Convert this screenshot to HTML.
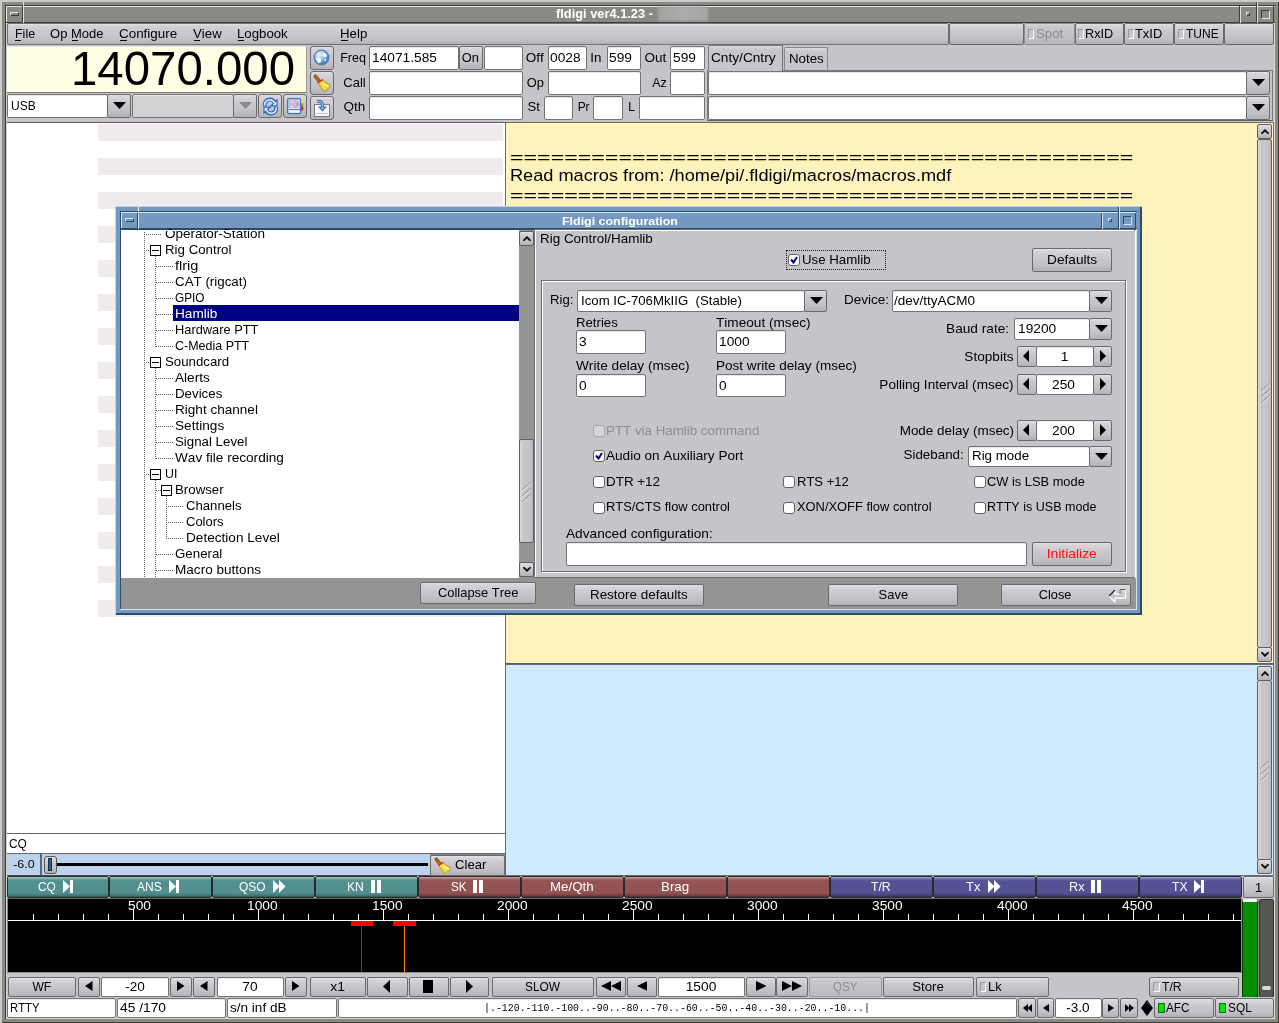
<!DOCTYPE html><html><head><meta charset="utf-8"><title>fldigi</title><style>html,body{margin:0;padding:0;width:1279px;height:1023px;overflow:hidden;background:#cbcbcb;}body{position:relative;font-family:'Liberation Sans',sans-serif;}div{position:absolute;box-sizing:border-box;}.t{height:0;line-height:0;white-space:pre;font-kerning:none;}</style></head><body><div style="left:2px;top:2px;width:1277px;height:1021px;background:#888a85;"></div>
<div style="left:5px;top:5px;width:1271px;height:1px;background:#3c3e3a;"></div>
<div style="left:5px;top:5px;width:1px;height:1014px;background:#3c3e3a;"></div>
<div style="left:6px;top:6px;width:1269px;height:1px;background:#e8e8e8;"></div>
<div style="left:6px;top:6px;width:1px;height:17px;background:#e8e8e8;"></div>
<div style="left:1278px;top:2px;width:1px;height:1021px;background:#3c3e3a;"></div>
<div style="left:2px;top:1022px;width:1277px;height:1px;background:#3c3e3a;"></div>
<div style="left:1274px;top:22px;width:1px;height:997px;background:#d9d9d9;"></div>
<div style="left:6px;top:1018px;width:1269px;height:1px;background:#d9d9d9;"></div>
<div style="left:6px;top:23px;width:1px;height:995px;background:#cfcfcf;"></div>
<div style="left:6px;top:22px;width:1269px;height:1px;background:#3c3e3a;"></div>
<div style="left:22px;top:6px;width:1px;height:16px;background:#3c3e3a;"></div>
<div style="left:23px;top:2px;width:1px;height:21px;background:#e0e0e0;"></div>
<div style="left:1239px;top:6px;width:1px;height:16px;background:#3c3e3a;"></div>
<div style="left:1240px;top:6px;width:1px;height:17px;background:#e0e0e0;"></div>
<div style="left:1256px;top:2px;width:1px;height:20px;background:#3c3e3a;"></div>
<div style="left:1257px;top:2px;width:1px;height:21px;background:#e0e0e0;"></div>
<div style="left:1273px;top:6px;width:1px;height:16px;background:#3c3e3a;"></div>
<div style="left:10px;top:12px;width:9px;height:4px;border:1px solid #e8e8e8;border-right-color:#3c3e3a;border-bottom-color:#3c3e3a"></div>
<div style="left:1246px;top:12px;width:4px;height:4px;border:1px solid #e8e8e8;border-right-color:#3c3e3a;border-bottom-color:#3c3e3a"></div>
<div style="left:1261px;top:10px;width:9px;height:9px;border:1px solid #3c3e3a;border-right-color:#e8e8e8;border-bottom-color:#e8e8e8"></div>
<div class="t" style="left:556.10px;top:13.93px;font-size:12.60px;color:#ffffff;font-weight:bold;transform:scaleX(1.0186);transform-origin:0 0;font-family:'Liberation Sans',sans-serif;">fldigi ver4.1.23 -</div>
<div style="left:658px;top:7px;width:50px;height:14px;background:linear-gradient(90deg,#a2a3a1,#acadab 50%,#a5a6a4);filter:blur(1px)"></div>
<div style="left:7px;top:23px;width:1267px;height:99px;background:#c6c4c8;"></div>
<div style="left:7px;top:23px;width:942px;height:22px;background:linear-gradient(#e6e4e8,#d2d0d4 2px,#c8c6ca 50%,#c2c0c4 80%,#b2b0b4);border:1px solid #727173;border-radius:2px"></div>
<div class="t" style="left:14.60px;top:33.93px;font-size:12.60px;color:#000;transform:scaleX(0.9890);transform-origin:0 0;font-family:'Liberation Sans',sans-serif;">File</div>
<div class="t" style="left:50.35px;top:33.93px;font-size:12.60px;color:#000;transform:scaleX(1.0345);transform-origin:0 0;font-family:'Liberation Sans',sans-serif;">Op Mode</div>
<div class="t" style="left:119.10px;top:33.93px;font-size:12.60px;color:#000;transform:scaleX(1.0651);transform-origin:0 0;font-family:'Liberation Sans',sans-serif;">Configure</div>
<div class="t" style="left:192.85px;top:33.93px;font-size:12.60px;color:#000;transform:scaleX(1.0512);transform-origin:0 0;font-family:'Liberation Sans',sans-serif;">View</div>
<div class="t" style="left:237.10px;top:33.93px;font-size:12.60px;color:#000;transform:scaleX(1.0492);transform-origin:0 0;font-family:'Liberation Sans',sans-serif;">Logbook</div>
<div class="t" style="left:340.10px;top:33.93px;font-size:12.60px;color:#000;transform:scaleX(1.0564);transform-origin:0 0;font-family:'Liberation Sans',sans-serif;">Help</div>
<div style="left:15px;top:40px;width:6px;height:1px;background:#000;"></div>
<div style="left:72px;top:40px;width:6px;height:1px;background:#000;"></div>
<div style="left:120px;top:40px;width:7px;height:1px;background:#000;"></div>
<div style="left:194px;top:40px;width:6px;height:1px;background:#000;"></div>
<div style="left:238px;top:40px;width:6px;height:1px;background:#000;"></div>
<div style="left:341px;top:40px;width:7px;height:1px;background:#000;"></div>
<div style="left:949px;top:23px;width:75px;height:22px;border:1px solid #6a696c;border-radius:2px;background:linear-gradient(#e4e2e6,#d6d4d8 2px,#c8c6ca 45%,#c3c1c5 70%,#b3b1b5);"></div>
<div style="left:1024px;top:23px;width:51px;height:22px;border:1px solid #8f8e91;border-radius:2px;background:linear-gradient(#d8d6da,#c9c7cb 3px,#c3c1c5 60%,#b9b7bb);"></div>
<div style="left:1075px;top:23px;width:49px;height:22px;border:1px solid #6a696c;border-radius:2px;background:linear-gradient(#e4e2e6,#d6d4d8 2px,#c8c6ca 45%,#c3c1c5 70%,#b3b1b5);"></div>
<div style="left:1124px;top:23px;width:50px;height:22px;border:1px solid #6a696c;border-radius:2px;background:linear-gradient(#e4e2e6,#d6d4d8 2px,#c8c6ca 45%,#c3c1c5 70%,#b3b1b5);"></div>
<div style="left:1174px;top:23px;width:50px;height:22px;border:1px solid #6a696c;border-radius:2px;background:linear-gradient(#e4e2e6,#d6d4d8 2px,#c8c6ca 45%,#c3c1c5 70%,#b3b1b5);"></div>
<div style="left:1224px;top:23px;width:50px;height:22px;border:1px solid #6a696c;border-radius:2px;background:linear-gradient(#e4e2e6,#d6d4d8 2px,#c8c6ca 45%,#c3c1c5 70%,#b3b1b5);"></div>
<div style="left:1028px;top:29px;width:6px;height:10px;background:#c8c6c9;border:1px solid #9a999c;border-right-color:#fafafa;border-bottom-color:#fafafa"></div>
<div style="left:1078px;top:29px;width:6px;height:10px;background:#c8c6c9;border:1px solid #9a999c;border-right-color:#fafafa;border-bottom-color:#fafafa"></div>
<div style="left:1128px;top:29px;width:6px;height:10px;background:#c8c6c9;border:1px solid #9a999c;border-right-color:#fafafa;border-bottom-color:#fafafa"></div>
<div style="left:1178px;top:29px;width:6px;height:10px;background:#c8c6c9;border:1px solid #9a999c;border-right-color:#fafafa;border-bottom-color:#fafafa"></div>
<div class="t" style="left:1035.60px;top:33.93px;font-size:12.60px;color:#8e8c90;transform:scaleX(1.0532);transform-origin:0 0;font-family:'Liberation Sans',sans-serif;">Spot</div>
<div class="t" style="left:1085.40px;top:33.93px;font-size:12.60px;color:#000;transform:scaleX(1.0084);transform-origin:0 0;font-family:'Liberation Sans',sans-serif;">RxID</div>
<div class="t" style="left:1135.10px;top:33.93px;font-size:12.60px;color:#000;transform:scaleX(1.0234);transform-origin:0 0;font-family:'Liberation Sans',sans-serif;">TxID</div>
<div class="t" style="left:1186.10px;top:33.93px;font-size:12.60px;color:#000;transform:scaleX(0.9525);transform-origin:0 0;font-family:'Liberation Sans',sans-serif;">TUNE</div>
<div style="left:7px;top:46px;width:300px;height:47px;background:#fefee4;border-top:1px solid #e4e2e6;border-bottom:1px solid #7a7a6c;border-right:1px solid #9a9a90"></div>
<div class="t" style="left:70.02px;top:68.80px;font-size:47.60px;color:#000;transform:scaleX(0.9956);transform-origin:100% 0;font-family:'Liberation Sans',sans-serif;">14070.000</div>
<div style="left:7px;top:94px;width:101px;height:24px;border:1px solid #737373;border-radius:2px;background:#fff;box-shadow:inset 0 1px 0 #e9e9e9;"></div>
<div class="t" style="left:11.10px;top:105.93px;font-size:12.60px;color:#000;transform:scaleX(0.9511);transform-origin:0 0;font-family:'Liberation Sans',sans-serif;">USB</div>
<div style="left:107px;top:94px;width:24px;height:24px;border:1px solid #6a696c;border-radius:2px;background:linear-gradient(#e4e2e6,#d6d4d8 2px,#c8c6ca 45%,#c3c1c5 70%,#b3b1b5);"></div>
<svg style="position:absolute;left:112.5px;top:102.0px;" width="13" height="7" viewBox="0 0 13 7"><polygon points="0,0 13,0 6.5,7" fill="#000"/></svg>
<div style="left:132px;top:94px;width:102px;height:24px;border:1px solid #737373;border-radius:2px;background:#d2d1d4;box-shadow:inset 0 1px 0 #e9e9e9;"></div>
<div style="left:233px;top:94px;width:24px;height:24px;border:1px solid #6a696c;border-radius:2px;background:linear-gradient(#e4e2e6,#d6d4d8 2px,#c8c6ca 45%,#c3c1c5 70%,#b3b1b5);"></div>
<svg style="position:absolute;left:238.5px;top:102.0px;" width="13" height="7" viewBox="0 0 13 7"><polygon points="0,0 13,0 6.5,7" fill="#8a898c"/></svg>
<div style="left:258px;top:94px;width:24px;height:24px;border:1px solid #6a696c;border-radius:3px;background:linear-gradient(#e4e2e6,#d6d4d8 2px,#c8c6ca 45%,#c3c1c5 70%,#b3b1b5);"></div>
<svg style="position:absolute;left:262px;top:97px;" width="17" height="19" viewBox="0 0 17 19"><path d="M2.6 9.2 C2.6 4 5 2.6 8 2.6 C10.5 2.6 12 4 13 6" stroke="#2d6cc0" stroke-width="4" fill="none"/><polygon points="7.5,9.5 15.6,9.5 15.6,1.4" fill="#2d6cc0"/><path d="M2.6 8.6 C2.6 4.4 5 2.8 8 2.8 C10.3 2.8 11.6 4 12.6 6" stroke="#e4efff" stroke-width="1.6" fill="none"/><polygon points="10.6,8.2 14.4,8.2 14.4,4.4" fill="#eef5ff"/><path d="M14.4 9.8 C14.4 15 12 16.4 9 16.4 C6.5 16.4 5 15 4 13" stroke="#2d6cc0" stroke-width="4" fill="none"/><polygon points="9.5,9.5 1.4,9.5 1.4,17.6" fill="#2d6cc0"/><path d="M14.4 10.4 C14.4 14.6 12 16.2 9 16.2 C6.7 16.2 5.4 15 4.4 13" stroke="#e4efff" stroke-width="1.6" fill="none"/><polygon points="6.4,10.8 2.6,10.8 2.6,14.6" fill="#eef5ff"/></svg>
<div style="left:283px;top:94px;width:24px;height:24px;border:1px solid #6a696c;border-radius:3px;background:linear-gradient(#e4e2e6,#d6d4d8 2px,#c8c6ca 45%,#c3c1c5 70%,#b3b1b5);"></div>
<svg style="position:absolute;left:286px;top:97px;" width="19" height="18" viewBox="0 0 19 18"><rect x="1.6" y="1.6" width="13" height="15" rx="1" fill="#cfe0f6" stroke="#3f74c0" stroke-width="1.3"/><rect x="3" y="13.2" width="11" height="2" fill="#f4f4f4"/><line x1="3" y1="12.6" x2="14" y2="12.6" stroke="#5878b0" stroke-width="1"/><line x1="3.8" y1="3" x2="3.8" y2="11" stroke="#8aa8d8" stroke-width="1"/><path d="M11.6 9.6 A3.4 3.4 0 1 1 12.8 7.2 V8.2 Q12.8 9 12 9 Q11.2 9 11.2 8.2 V5.6" fill="none" stroke="#d878a8" stroke-width="0.9"/><circle cx="9.5" cy="7.3" r="1.5" fill="none" stroke="#d878a8" stroke-width="0.9"/><rect x="15" y="2.5" width="2.2" height="4" fill="#f4e020"/><rect x="15" y="6.5" width="2.2" height="3" fill="#78a820"/><rect x="15" y="9.5" width="2.2" height="4" fill="#e82020"/></svg>
<div style="left:310px;top:46px;width:24px;height:24px;border:1px solid #6a696c;border-radius:3px;background:linear-gradient(#e4e2e6,#d6d4d8 2px,#c8c6ca 45%,#c3c1c5 70%,#b3b1b5);"></div>
<svg style="position:absolute;left:313px;top:49px;" width="18" height="18" viewBox="0 0 18 18"><defs><radialGradient id="gg" cx="35%" cy="30%" r="75%"><stop offset="0" stop-color="#f4faff"/><stop offset=".55" stop-color="#8ab8ea"/><stop offset="1" stop-color="#2f68b8"/></radialGradient></defs><circle cx="8.5" cy="8.5" r="7.3" fill="url(#gg)" stroke="#4a7cc4" stroke-width="1.2"/><path d="M3 9.5 L6 8.5 L8 10 L7.5 13.5 L5 14 Z" fill="#ffffff"/><path d="M9.5 3.5 L13 4.5 L14 7 L11.5 8.5 L10 6.5 Z" fill="#ffffff"/><path d="M11 10.5 L13.5 10 L12.5 13 Z" fill="#ffffff" opacity=".8"/></svg>
<div style="left:310px;top:71px;width:24px;height:24px;border:1px solid #6a696c;border-radius:3px;background:linear-gradient(#e4e2e6,#d6d4d8 2px,#c8c6ca 45%,#c3c1c5 70%,#b3b1b5);"></div>
<svg style="position:absolute;left:313px;top:74px;" width="20" height="20" viewBox="0 0 20 20"><g transform="scale(1.0)"><path d="M2.5 2.5 L6.5 7.5" stroke="#6a3a10" stroke-width="3.6" stroke-linecap="round"/><path d="M2.5 2.5 L6.5 7.5" stroke="#b0701e" stroke-width="2.2" stroke-linecap="round"/><path d="M5 9 L9.5 6 Q13 9 17 11 L16.5 13.5 Q13.5 16 11 17.5 Q8 14 5 9Z" fill="#f0dc40" stroke="#b89a10" stroke-width="1"/><path d="M10 9.5 Q13 12 16 12.5" stroke="#fff8a0" stroke-width="1.2" fill="none"/><path d="M4.5 9 L10 5.5" stroke="#d02a20" stroke-width="1.4"/></g></svg>
<div style="left:310px;top:96px;width:24px;height:24px;border:1px solid #6a696c;border-radius:3px;background:linear-gradient(#e4e2e6,#d6d4d8 2px,#c8c6ca 45%,#c3c1c5 70%,#b3b1b5);"></div>
<svg style="position:absolute;left:312px;top:98px;" width="20" height="20" viewBox="0 0 20 20"><rect x="2.5" y="6.5" width="15" height="12" fill="#f6f6f6" stroke="#7a7a7a"/><rect x="4" y="15" width="12" height="1" fill="#c4c4c4"/><path d="M5 3.5 Q11 2 10.5 9" fill="none" stroke="#2d6cc0" stroke-width="3.2"/><path d="M5 3.5 Q11 2 10.5 9" fill="none" stroke="#9cc4f0" stroke-width="1.2"/><polygon points="6,8.5 15,8.5 10.5,13.5" fill="#2d6cc0"/><polygon points="8.5,9.5 12.5,9.5 10.5,11.8" fill="#9cc4f0"/></svg>
<div class="t" style="left:339.70px;top:57.93px;font-size:12.60px;color:#000;transform:scaleX(0.9928);transform-origin:100% 0;font-family:'Liberation Sans',sans-serif;">Freq</div>
<div class="t" style="left:343.89px;top:82.93px;font-size:12.60px;color:#000;transform:scaleX(1.0316);transform-origin:100% 0;font-family:'Liberation Sans',sans-serif;">Call</div>
<div class="t" style="left:345.29px;top:106.93px;font-size:12.60px;color:#000;transform:scaleX(1.0718);transform-origin:100% 0;font-family:'Liberation Sans',sans-serif;">Qth</div>
<div style="left:369px;top:46px;width:90px;height:24px;border:1px solid #737373;border-radius:2px;background:#fff;box-shadow:inset 0 1px 0 #e9e9e9;"></div>
<div class="t" style="left:371.60px;top:57.93px;font-size:12.60px;color:#000;transform:scaleX(1.0904);transform-origin:0 0;font-family:'Liberation Sans',sans-serif;">14071.585</div>
<div style="left:459px;top:46px;width:24px;height:24px;border:1px solid #6a696c;border-radius:2px;background:linear-gradient(#e4e2e6,#d6d4d8 2px,#c8c6ca 45%,#c3c1c5 70%,#b3b1b5);"></div>
<div class="t" style="left:462.10px;top:57.93px;font-size:12.60px;color:#000;transform:scaleX(1.0152);transform-origin:50% 0;font-family:'Liberation Sans',sans-serif;">On</div>
<div style="left:484px;top:46px;width:39px;height:24px;border:1px solid #737373;border-radius:2px;background:#fff;box-shadow:inset 0 1px 0 #e9e9e9;"></div>
<div class="t" style="left:527.13px;top:57.93px;font-size:12.60px;color:#000;transform:scaleX(1.0691);transform-origin:100% 0;font-family:'Liberation Sans',sans-serif;">Off</div>
<div style="left:548px;top:46px;width:39px;height:24px;border:1px solid #737373;border-radius:2px;background:#fff;box-shadow:inset 0 1px 0 #e9e9e9;"></div>
<div class="t" style="left:549.60px;top:57.93px;font-size:12.60px;color:#000;transform:scaleX(1.0905);transform-origin:0 0;font-family:'Liberation Sans',sans-serif;">0028</div>
<div class="t" style="left:591.49px;top:57.93px;font-size:12.60px;color:#000;transform:scaleX(1.0618);transform-origin:100% 0;font-family:'Liberation Sans',sans-serif;">In</div>
<div style="left:607px;top:46px;width:34px;height:24px;border:1px solid #737373;border-radius:2px;background:#fff;box-shadow:inset 0 1px 0 #e9e9e9;"></div>
<div class="t" style="left:608.50px;top:57.93px;font-size:12.60px;color:#000;transform:scaleX(1.0905);transform-origin:0 0;font-family:'Liberation Sans',sans-serif;">599</div>
<div class="t" style="left:646.29px;top:57.93px;font-size:12.60px;color:#000;transform:scaleX(1.0718);transform-origin:100% 0;font-family:'Liberation Sans',sans-serif;">Out</div>
<div style="left:670px;top:46px;width:35px;height:24px;border:1px solid #737373;border-radius:2px;background:#fff;box-shadow:inset 0 1px 0 #e9e9e9;"></div>
<div class="t" style="left:672.50px;top:57.93px;font-size:12.60px;color:#000;transform:scaleX(1.0905);transform-origin:0 0;font-family:'Liberation Sans',sans-serif;">599</div>
<div style="left:369px;top:71px;width:154px;height:24px;border:1px solid #737373;border-radius:2px;background:#fff;box-shadow:inset 0 1px 0 #e9e9e9;"></div>
<div class="t" style="left:526.89px;top:82.93px;font-size:12.60px;color:#000;transform:scaleX(1.0161);transform-origin:100% 0;font-family:'Liberation Sans',sans-serif;">Op</div>
<div style="left:548px;top:71px;width:93px;height:24px;border:1px solid #737373;border-radius:2px;background:#fff;box-shadow:inset 0 1px 0 #e9e9e9;"></div>
<div class="t" style="left:651.90px;top:82.93px;font-size:12.60px;color:#000;transform:scaleX(0.9861);transform-origin:100% 0;font-family:'Liberation Sans',sans-serif;">Az</div>
<div style="left:670px;top:71px;width:35px;height:24px;border:1px solid #737373;border-radius:2px;background:#fff;box-shadow:inset 0 1px 0 #e9e9e9;"></div>
<div style="left:369px;top:96px;width:154px;height:24px;border:1px solid #737373;border-radius:2px;background:#fff;box-shadow:inset 0 1px 0 #e9e9e9;"></div>
<div class="t" style="left:527.59px;top:106.93px;font-size:12.60px;color:#000;transform:scaleX(1.0355);transform-origin:100% 0;font-family:'Liberation Sans',sans-serif;">St</div>
<div style="left:544px;top:96px;width:29px;height:24px;border:1px solid #737373;border-radius:2px;background:#fff;box-shadow:inset 0 1px 0 #e9e9e9;"></div>
<div class="t" style="left:577.40px;top:106.93px;font-size:12.60px;color:#000;transform:scaleX(0.9499);transform-origin:100% 0;font-family:'Liberation Sans',sans-serif;">Pr</div>
<div style="left:593px;top:96px;width:30px;height:24px;border:1px solid #737373;border-radius:2px;background:#fff;box-shadow:inset 0 1px 0 #e9e9e9;"></div>
<div class="t" style="left:627.99px;top:106.93px;font-size:12.60px;color:#000;transform:scaleX(0.9544);transform-origin:100% 0;font-family:'Liberation Sans',sans-serif;">L</div>
<div style="left:639px;top:96px;width:66px;height:24px;border:1px solid #737373;border-radius:2px;background:#fff;box-shadow:inset 0 1px 0 #e9e9e9;"></div>
<div style="left:707px;top:70px;width:566px;height:51px;background:#c6c4c8;border:1px solid #7a797c;border-bottom-color:#5f5e61"></div>
<div style="left:708px;top:45px;width:75px;height:26px;background:linear-gradient(#dcdadf,#c8c6ca 4px,#c6c4c8);border:1px solid #7a797c;border-bottom:none;border-radius:2px 2px 0 0"></div>
<div style="left:782px;top:45px;width:1px;height:26px;background:#6f6e71;"></div>
<div style="left:784px;top:47px;width:44px;height:23px;background:linear-gradient(#dcdadf,#c8c6ca 4px,#c6c4c8);border:1px solid #8a898c;border-bottom:none;border-radius:2px 2px 0 0"></div>
<div class="t" style="left:711.40px;top:57.93px;font-size:12.60px;color:#000;transform:scaleX(1.0852);transform-origin:0 0;font-family:'Liberation Sans',sans-serif;">Cnty/Cntry</div>
<div class="t" style="left:788.50px;top:58.93px;font-size:12.60px;color:#000;transform:scaleX(1.0534);transform-origin:0 0;font-family:'Liberation Sans',sans-serif;">Notes</div>
<div style="left:708px;top:71px;width:539px;height:24px;border:1px solid #737373;border-radius:2px;background:#fff;box-shadow:inset 0 1px 0 #e9e9e9;"></div>
<div style="left:1246px;top:71px;width:24px;height:24px;border:1px solid #6a696c;border-radius:2px;background:linear-gradient(#e4e2e6,#d6d4d8 2px,#c8c6ca 45%,#c3c1c5 70%,#b3b1b5);"></div>
<svg style="position:absolute;left:1251.5px;top:79.0px;" width="13" height="7" viewBox="0 0 13 7"><polygon points="0,0 13,0 6.5,7" fill="#000"/></svg>
<div style="left:708px;top:96px;width:539px;height:24px;border:1px solid #737373;border-radius:2px;background:#fff;box-shadow:inset 0 1px 0 #e9e9e9;"></div>
<div style="left:1246px;top:96px;width:24px;height:24px;border:1px solid #6a696c;border-radius:2px;background:linear-gradient(#e4e2e6,#d6d4d8 2px,#c8c6ca 45%,#c3c1c5 70%,#b3b1b5);"></div>
<svg style="position:absolute;left:1251.5px;top:104.0px;" width="13" height="7" viewBox="0 0 13 7"><polygon points="0,0 13,0 6.5,7" fill="#000"/></svg>
<div style="left:7px;top:122px;width:1267px;height:1px;background:#5c5b5e;"></div>
<div style="left:7px;top:123px;width:498px;height:711px;background:#ffffff;"></div>
<div style="left:98px;top:124px;width:405px;height:17px;background:#efebef;"></div>
<div style="left:98px;top:158px;width:405px;height:17px;background:#efebef;"></div>
<div style="left:98px;top:192px;width:405px;height:17px;background:#efebef;"></div>
<div style="left:98px;top:226px;width:405px;height:17px;background:#efebef;"></div>
<div style="left:98px;top:260px;width:405px;height:17px;background:#efebef;"></div>
<div style="left:98px;top:294px;width:405px;height:17px;background:#efebef;"></div>
<div style="left:98px;top:328px;width:405px;height:17px;background:#efebef;"></div>
<div style="left:98px;top:362px;width:405px;height:17px;background:#efebef;"></div>
<div style="left:98px;top:396px;width:405px;height:17px;background:#efebef;"></div>
<div style="left:98px;top:430px;width:405px;height:17px;background:#efebef;"></div>
<div style="left:98px;top:464px;width:405px;height:17px;background:#efebef;"></div>
<div style="left:98px;top:498px;width:405px;height:17px;background:#efebef;"></div>
<div style="left:98px;top:532px;width:405px;height:17px;background:#efebef;"></div>
<div style="left:98px;top:566px;width:405px;height:17px;background:#efebef;"></div>
<div style="left:98px;top:600px;width:405px;height:17px;background:#efebef;"></div>
<div style="left:505px;top:122px;width:769px;height:542px;background:#fef2bd;border:1px solid #707058;border-right-color:#7a7a5a;border-bottom-color:#606050"></div>
<div style="left:1257px;top:124px;width:15px;height:15px;border:1px solid #5f5e61;border-radius:2px;background:linear-gradient(#e4e2e6,#d6d4d8 2px,#c8c6ca 45%,#c3c1c5 70%,#b3b1b5);"></div>
<svg style="position:absolute;left:1260.5px;top:129.0px;" width="8" height="5" viewBox="0 0 8 5"><polygon points="0,4.5 4,0.3 8,4.5 6.3,4.5 4,2.3 1.7,4.5" fill="#000" stroke="#000" stroke-width=".6"/></svg>
<div style="left:1257px;top:139px;width:15px;height:509px;border:1px solid #616063;border-radius:2px;background:linear-gradient(90deg,#dddbe0,#c8c6ca 3px,#c6c4c8 70%,#b8b6ba);"></div>
<svg style="position:absolute;left:1260.5px;top:383.0px;" width="10" height="21" viewBox="0 0 10 21"><path d="M0.5 7.5 L8.5 0.5" stroke="#6f6e71" stroke-width="1" stroke-dasharray="1,0.6"/><path d="M1 8.5 L9 1.5" stroke="#fafafa" stroke-width="0.8" opacity=".7"/><path d="M0.5 13.5 L8.5 6.5" stroke="#6f6e71" stroke-width="1" stroke-dasharray="1,0.6"/><path d="M1 14.5 L9 7.5" stroke="#fafafa" stroke-width="0.8" opacity=".7"/><path d="M0.5 19.5 L8.5 12.5" stroke="#6f6e71" stroke-width="1" stroke-dasharray="1,0.6"/><path d="M1 20.5 L9 13.5" stroke="#fafafa" stroke-width="0.8" opacity=".7"/></svg>
<div style="left:1257px;top:647px;width:15px;height:15px;border:1px solid #5f5e61;border-radius:2px;background:linear-gradient(#e4e2e6,#d6d4d8 2px,#c8c6ca 45%,#c3c1c5 70%,#b3b1b5);"></div>
<svg style="position:absolute;left:1260.5px;top:652.0px;" width="8" height="5" viewBox="0 0 8 5"><polygon points="0,0.5 4,4.7 8,0.5 6.3,0.5 4,2.7 1.7,0.5" fill="#000" stroke="#000" stroke-width=".6"/></svg>
<div class="t" style="left:510.30px;top:158.48px;font-size:16.80px;color:#000;transform:scaleX(1.3825);transform-origin:0 0;font-family:'Liberation Sans',sans-serif;">==============================================</div>
<div class="t" style="left:510.30px;top:176.48px;font-size:16.80px;color:#000;transform:scaleX(1.0827);transform-origin:0 0;font-family:'Liberation Sans',sans-serif;">Read macros from: /home/pi/.fldigi/macros/macros.mdf</div>
<div class="t" style="left:510.30px;top:196.48px;font-size:16.80px;color:#000;transform:scaleX(1.3825);transform-origin:0 0;font-family:'Liberation Sans',sans-serif;">==============================================</div>
<div style="left:505px;top:664px;width:769px;height:212px;background:#d0eafd;border:1px solid #5f6e78;border-right-color:#6a7a84;border-bottom-color:#5f6e78"></div>
<div style="left:1257px;top:666px;width:15px;height:15px;border:1px solid #5f5e61;border-radius:2px;background:linear-gradient(#e4e2e6,#d6d4d8 2px,#c8c6ca 45%,#c3c1c5 70%,#b3b1b5);"></div>
<svg style="position:absolute;left:1260.5px;top:671.0px;" width="8" height="5" viewBox="0 0 8 5"><polygon points="0,4.5 4,0.3 8,4.5 6.3,4.5 4,2.3 1.7,4.5" fill="#000" stroke="#000" stroke-width=".6"/></svg>
<div style="left:1257px;top:680px;width:15px;height:180px;border:1px solid #616063;border-radius:2px;background:linear-gradient(90deg,#dddbe0,#c8c6ca 3px,#c6c4c8 70%,#b8b6ba);"></div>
<svg style="position:absolute;left:1260.0px;top:760.5px;" width="10" height="21" viewBox="0 0 10 21"><path d="M0.5 7.5 L8.5 0.5" stroke="#6f6e71" stroke-width="1" stroke-dasharray="1,0.6"/><path d="M1 8.5 L9 1.5" stroke="#fafafa" stroke-width="0.8" opacity=".7"/><path d="M0.5 13.5 L8.5 6.5" stroke="#6f6e71" stroke-width="1" stroke-dasharray="1,0.6"/><path d="M1 14.5 L9 7.5" stroke="#fafafa" stroke-width="0.8" opacity=".7"/><path d="M0.5 19.5 L8.5 12.5" stroke="#6f6e71" stroke-width="1" stroke-dasharray="1,0.6"/><path d="M1 20.5 L9 13.5" stroke="#fafafa" stroke-width="0.8" opacity=".7"/></svg>
<div style="left:1257px;top:859px;width:15px;height:15px;border:1px solid #5f5e61;border-radius:2px;background:linear-gradient(#e4e2e6,#d6d4d8 2px,#c8c6ca 45%,#c3c1c5 70%,#b3b1b5);"></div>
<svg style="position:absolute;left:1260.5px;top:864.0px;" width="8" height="5" viewBox="0 0 8 5"><polygon points="0,0.5 4,4.7 8,0.5 6.3,0.5 4,2.7 1.7,0.5" fill="#000" stroke="#000" stroke-width=".6"/></svg>
<div style="left:7px;top:833px;width:498px;height:21px;background:#ffffff;border-top:1px solid #6a696c;border-bottom:1px solid #6a696c"></div>
<div class="t" style="left:8.60px;top:843.93px;font-size:12.60px;color:#000;transform:scaleX(0.9433);transform-origin:0 0;font-family:'Liberation Sans',sans-serif;">CQ</div>
<div style="left:7px;top:854px;width:423px;height:22px;background:#bdd2ed;border-bottom:1px solid #4a4a4a"></div>
<div style="left:40px;top:854px;width:2px;height:21px;background:#5c6a78;"></div>
<div class="t" style="left:14.05px;top:864.30px;font-size:11.55px;color:#000;transform:scaleX(1.0788);transform-origin:50% 0;font-family:'Liberation Sans',sans-serif;">-6.0</div>
<div style="left:57px;top:863px;width:371px;height:3px;background:#000;"></div>
<div style="left:44px;top:856px;width:13px;height:18px;border:1px solid #58575a;border-radius:3px;background:linear-gradient(#e4e2e6,#d6d4d8 2px,#c8c6ca 45%,#c3c1c5 70%,#b3b1b5);"></div>
<div style="left:48px;top:858px;width:4px;height:13px;background:#215f99;border:1px solid #102d4a"></div>
<div style="left:430px;top:855px;width:75px;height:21px;border:1px solid #6a696c;border-radius:2px;background:linear-gradient(#e4e2e6,#d6d4d8 2px,#c8c6ca 45%,#c3c1c5 70%,#b3b1b5);"></div>
<svg style="position:absolute;left:434px;top:857px;" width="20" height="20" viewBox="0 0 20 20"><g transform="scale(0.95)"><path d="M2.5 2.5 L6.5 7.5" stroke="#6a3a10" stroke-width="3.6" stroke-linecap="round"/><path d="M2.5 2.5 L6.5 7.5" stroke="#b0701e" stroke-width="2.2" stroke-linecap="round"/><path d="M5 9 L9.5 6 Q13 9 17 11 L16.5 13.5 Q13.5 16 11 17.5 Q8 14 5 9Z" fill="#f0dc40" stroke="#b89a10" stroke-width="1"/><path d="M10 9.5 Q13 12 16 12.5" stroke="#fff8a0" stroke-width="1.2" fill="none"/><path d="M4.5 9 L10 5.5" stroke="#d02a20" stroke-width="1.4"/></g></svg>
<div class="t" style="left:454.60px;top:864.93px;font-size:12.60px;color:#000;transform:scaleX(1.0426);transform-origin:0 0;font-family:'Liberation Sans',sans-serif;">Clear</div>
<div style="left:7px;top:876px;width:1267px;height:23px;background:#c6c4c8;"></div>
<div style="left:7px;top:876px;width:102px;height:22px;background:linear-gradient(#a6cccb,#6aa3a2 2px,#52908f 4px,#52908f 80%,#3f7372 95%,#2a4a4a);border:1px solid #2b2b2b;border-radius:2px"></div>
<div class="t" style="left:38.19px;top:886.93px;font-size:12.60px;color:#ffffff;transform:scaleX(0.9433);transform-origin:0 0;font-family:'Liberation Sans',sans-serif;">CQ</div>
<svg style="position:absolute;left:63px;top:880px;" width="10" height="13" viewBox="0 0 10 13"><polygon points="0,0 7,6.5 0,13" fill="#fff"/><rect x="7" y="0" width="3" height="13" fill="#fff"/></svg>
<div style="left:109px;top:876px;width:103px;height:22px;background:linear-gradient(#a6cccb,#6aa3a2 2px,#52908f 4px,#52908f 80%,#3f7372 95%,#2a4a4a);border:1px solid #2b2b2b;border-radius:2px"></div>
<div class="t" style="left:137.19px;top:886.93px;font-size:12.60px;color:#ffffff;transform:scaleX(0.9577);transform-origin:0 0;font-family:'Liberation Sans',sans-serif;">ANS</div>
<svg style="position:absolute;left:169px;top:880px;" width="10" height="13" viewBox="0 0 10 13"><polygon points="0,0 7,6.5 0,13" fill="#fff"/><rect x="7" y="0" width="3" height="13" fill="#fff"/></svg>
<div style="left:212px;top:876px;width:103px;height:22px;background:linear-gradient(#a6cccb,#6aa3a2 2px,#52908f 4px,#52908f 80%,#3f7372 95%,#2a4a4a);border:1px solid #2b2b2b;border-radius:2px"></div>
<div class="t" style="left:239.33px;top:886.93px;font-size:12.60px;color:#ffffff;transform:scaleX(0.9474);transform-origin:0 0;font-family:'Liberation Sans',sans-serif;">QSO</div>
<svg style="position:absolute;left:273px;top:880px;" width="13" height="13" viewBox="0 0 13 13"><polygon points="0,0 6.5,6.5 0,13" fill="#fff"/><polygon points="6,0 12.5,6.5 6,13" fill="#fff"/></svg>
<div style="left:315px;top:876px;width:103px;height:22px;background:linear-gradient(#a6cccb,#6aa3a2 2px,#52908f 4px,#52908f 80%,#3f7372 95%,#2a4a4a);border:1px solid #2b2b2b;border-radius:2px"></div>
<div class="t" style="left:347.17px;top:886.93px;font-size:12.60px;color:#ffffff;transform:scaleX(0.9632);transform-origin:0 0;font-family:'Liberation Sans',sans-serif;">KN</div>
<svg style="position:absolute;left:371px;top:880px;" width="10" height="13" viewBox="0 0 10 13"><rect x="0" y="0" width="4" height="13" fill="#fff"/><rect x="6" y="0" width="4" height="13" fill="#fff"/></svg>
<div style="left:418px;top:876px;width:103px;height:22px;background:linear-gradient(#cfa3a3,#a26a6a 2px,#935353 4px,#935353 80%,#6f3c3c 95%,#4a2a2a);border:1px solid #2b2b2b;border-radius:2px"></div>
<div class="t" style="left:450.85px;top:886.93px;font-size:12.60px;color:#ffffff;transform:scaleX(0.9221);transform-origin:0 0;font-family:'Liberation Sans',sans-serif;">SK</div>
<svg style="position:absolute;left:473px;top:880px;" width="10" height="13" viewBox="0 0 10 13"><rect x="0" y="0" width="4" height="13" fill="#fff"/><rect x="6" y="0" width="4" height="13" fill="#fff"/></svg>
<div style="left:521px;top:876px;width:103px;height:22px;background:linear-gradient(#cfa3a3,#a26a6a 2px,#935353 4px,#935353 80%,#6f3c3c 95%,#4a2a2a);border:1px solid #2b2b2b;border-radius:2px"></div>
<div class="t" style="left:549.82px;top:886.93px;font-size:12.60px;color:#ffffff;transform:scaleX(1.0545);transform-origin:0 0;font-family:'Liberation Sans',sans-serif;">Me/Qth</div>
<div style="left:624px;top:876px;width:103px;height:22px;background:linear-gradient(#cfa3a3,#a26a6a 2px,#935353 4px,#935353 80%,#6f3c3c 95%,#4a2a2a);border:1px solid #2b2b2b;border-radius:2px"></div>
<div class="t" style="left:660.52px;top:886.93px;font-size:12.60px;color:#ffffff;transform:scaleX(1.0580);transform-origin:0 0;font-family:'Liberation Sans',sans-serif;">Brag</div>
<div style="left:727px;top:876px;width:103px;height:22px;background:linear-gradient(#cfa3a3,#a26a6a 2px,#935353 4px,#935353 80%,#6f3c3c 95%,#4a2a2a);border:1px solid #2b2b2b;border-radius:2px"></div>
<div style="left:830px;top:876px;width:103px;height:22px;background:linear-gradient(#a8a8d2,#6a6aa8 2px,#525295 4px,#525295 80%,#3d3d72 95%,#2a2a4a);border:1px solid #2b2b2b;border-radius:2px"></div>
<div class="t" style="left:870.74px;top:886.93px;font-size:12.60px;color:#ffffff;transform:scaleX(0.9716);transform-origin:0 0;font-family:'Liberation Sans',sans-serif;">T/R</div>
<div style="left:933px;top:876px;width:103px;height:22px;background:linear-gradient(#a8a8d2,#6a6aa8 2px,#525295 4px,#525295 80%,#3d3d72 95%,#2a2a4a);border:1px solid #2b2b2b;border-radius:2px"></div>
<div class="t" style="left:966.38px;top:886.93px;font-size:12.60px;color:#ffffff;transform:scaleX(1.0316);transform-origin:0 0;font-family:'Liberation Sans',sans-serif;">Tx</div>
<svg style="position:absolute;left:988px;top:880px;" width="13" height="13" viewBox="0 0 13 13"><polygon points="0,0 6.5,6.5 0,13" fill="#fff"/><polygon points="6,0 12.5,6.5 6,13" fill="#fff"/></svg>
<div style="left:1036px;top:876px;width:103px;height:22px;background:linear-gradient(#a8a8d2,#6a6aa8 2px,#525295 4px,#525295 80%,#3d3d72 95%,#2a2a4a);border:1px solid #2b2b2b;border-radius:2px"></div>
<div class="t" style="left:1068.87px;top:886.93px;font-size:12.60px;color:#ffffff;transform:scaleX(1.0035);transform-origin:0 0;font-family:'Liberation Sans',sans-serif;">Rx</div>
<svg style="position:absolute;left:1091px;top:880px;" width="10" height="13" viewBox="0 0 10 13"><rect x="0" y="0" width="4" height="13" fill="#fff"/><rect x="6" y="0" width="4" height="13" fill="#fff"/></svg>
<div style="left:1139px;top:876px;width:103px;height:22px;background:linear-gradient(#a8a8d2,#6a6aa8 2px,#525295 4px,#525295 80%,#3d3d72 95%,#2a2a4a);border:1px solid #2b2b2b;border-radius:2px"></div>
<div class="t" style="left:1171.83px;top:886.93px;font-size:12.60px;color:#ffffff;transform:scaleX(0.9656);transform-origin:0 0;font-family:'Liberation Sans',sans-serif;">TX</div>
<svg style="position:absolute;left:1194px;top:880px;" width="10" height="13" viewBox="0 0 10 13"><polygon points="0,0 7,6.5 0,13" fill="#fff"/><rect x="7" y="0" width="3" height="13" fill="#fff"/></svg>
<div style="left:1243px;top:876px;width:31px;height:22px;border:1px solid #6a696c;border-radius:2px;background:linear-gradient(#e4e2e6,#d6d4d8 2px,#c8c6ca 45%,#c3c1c5 70%,#b3b1b5);"></div>
<div class="t" style="left:1254.50px;top:887.93px;font-size:12.60px;color:#000;transform:scaleX(1.0905);transform-origin:50% 0;font-family:'Liberation Sans',sans-serif;">1</div>
<div style="left:7px;top:898px;width:1235px;height:76px;background:#c6c4c8;"></div>
<div style="left:7px;top:898px;width:1235px;height:75px;background:#000;border:1px solid #8a898c;border-top-color:#6a696c"></div>
<div style="left:8px;top:920px;width:1233px;height:1px;background:#ffffff;"></div>
<svg style="position:absolute;left:8px;top:899px;" width="1233" height="73" viewBox="0 0 1233 73"><rect x="25.0" y="15" width="1" height="6" fill="#fff"/><rect x="50.0" y="15" width="1" height="6" fill="#fff"/><rect x="75.0" y="15" width="1" height="6" fill="#fff"/><rect x="100.0" y="15" width="1" height="6" fill="#fff"/><rect x="125.0" y="10" width="1" height="11" fill="#fff"/><rect x="150.0" y="15" width="1" height="6" fill="#fff"/><rect x="175.0" y="15" width="1" height="6" fill="#fff"/><rect x="200.0" y="15" width="1" height="6" fill="#fff"/><rect x="225.0" y="15" width="1" height="6" fill="#fff"/><rect x="250.0" y="10" width="1" height="11" fill="#fff"/><rect x="275.0" y="15" width="1" height="6" fill="#fff"/><rect x="300.0" y="15" width="1" height="6" fill="#fff"/><rect x="325.0" y="15" width="1" height="6" fill="#fff"/><rect x="350.0" y="15" width="1" height="6" fill="#fff"/><rect x="375.0" y="10" width="1" height="11" fill="#fff"/><rect x="400.0" y="15" width="1" height="6" fill="#fff"/><rect x="425.0" y="15" width="1" height="6" fill="#fff"/><rect x="450.0" y="15" width="1" height="6" fill="#fff"/><rect x="475.0" y="15" width="1" height="6" fill="#fff"/><rect x="500.0" y="10" width="1" height="11" fill="#fff"/><rect x="525.0" y="15" width="1" height="6" fill="#fff"/><rect x="550.0" y="15" width="1" height="6" fill="#fff"/><rect x="575.0" y="15" width="1" height="6" fill="#fff"/><rect x="600.0" y="15" width="1" height="6" fill="#fff"/><rect x="625.0" y="10" width="1" height="11" fill="#fff"/><rect x="650.0" y="15" width="1" height="6" fill="#fff"/><rect x="675.0" y="15" width="1" height="6" fill="#fff"/><rect x="700.0" y="15" width="1" height="6" fill="#fff"/><rect x="725.0" y="15" width="1" height="6" fill="#fff"/><rect x="750.0" y="10" width="1" height="11" fill="#fff"/><rect x="775.0" y="15" width="1" height="6" fill="#fff"/><rect x="800.0" y="15" width="1" height="6" fill="#fff"/><rect x="825.0" y="15" width="1" height="6" fill="#fff"/><rect x="850.0" y="15" width="1" height="6" fill="#fff"/><rect x="875.0" y="10" width="1" height="11" fill="#fff"/><rect x="900.0" y="15" width="1" height="6" fill="#fff"/><rect x="925.0" y="15" width="1" height="6" fill="#fff"/><rect x="950.0" y="15" width="1" height="6" fill="#fff"/><rect x="975.0" y="15" width="1" height="6" fill="#fff"/><rect x="1000.0" y="10" width="1" height="11" fill="#fff"/><rect x="1025.0" y="15" width="1" height="6" fill="#fff"/><rect x="1050.0" y="15" width="1" height="6" fill="#fff"/><rect x="1075.0" y="15" width="1" height="6" fill="#fff"/><rect x="1100.0" y="15" width="1" height="6" fill="#fff"/><rect x="1125.0" y="10" width="1" height="11" fill="#fff"/><rect x="1150.0" y="15" width="1" height="6" fill="#fff"/><rect x="1175.0" y="15" width="1" height="6" fill="#fff"/><rect x="1200.0" y="15" width="1" height="6" fill="#fff"/><rect x="1225.0" y="15" width="1" height="6" fill="#fff"/></svg>
<div class="t" style="left:128.10px;top:905.93px;font-size:12.60px;color:#ffffff;transform:scaleX(1.0905);transform-origin:0 0;font-family:'Liberation Sans',sans-serif;">500</div>
<div class="t" style="left:247.10px;top:905.93px;font-size:12.60px;color:#ffffff;transform:scaleX(1.0905);transform-origin:0 0;font-family:'Liberation Sans',sans-serif;">1000</div>
<div class="t" style="left:372.10px;top:905.93px;font-size:12.60px;color:#ffffff;transform:scaleX(1.0905);transform-origin:0 0;font-family:'Liberation Sans',sans-serif;">1500</div>
<div class="t" style="left:497.10px;top:905.93px;font-size:12.60px;color:#ffffff;transform:scaleX(1.0905);transform-origin:0 0;font-family:'Liberation Sans',sans-serif;">2000</div>
<div class="t" style="left:622.10px;top:905.93px;font-size:12.60px;color:#ffffff;transform:scaleX(1.0905);transform-origin:0 0;font-family:'Liberation Sans',sans-serif;">2500</div>
<div class="t" style="left:747.10px;top:905.93px;font-size:12.60px;color:#ffffff;transform:scaleX(1.0905);transform-origin:0 0;font-family:'Liberation Sans',sans-serif;">3000</div>
<div class="t" style="left:872.10px;top:905.93px;font-size:12.60px;color:#ffffff;transform:scaleX(1.0905);transform-origin:0 0;font-family:'Liberation Sans',sans-serif;">3500</div>
<div class="t" style="left:997.10px;top:905.93px;font-size:12.60px;color:#ffffff;transform:scaleX(1.0905);transform-origin:0 0;font-family:'Liberation Sans',sans-serif;">4000</div>
<div class="t" style="left:1122.10px;top:905.93px;font-size:12.60px;color:#ffffff;transform:scaleX(1.0905);transform-origin:0 0;font-family:'Liberation Sans',sans-serif;">4500</div>
<div style="left:351px;top:921px;width:22px;height:5px;background:#ff0000;"></div>
<div style="left:361px;top:926px;width:1px;height:46px;background:#ff0000;"></div>
<div style="left:393px;top:921px;width:23px;height:5px;background:#ff0000;"></div>
<div style="left:404px;top:926px;width:1px;height:46px;background:#ff8000;"></div>
<div style="left:1242px;top:899px;width:16px;height:99px;background:#008f00;border:1px solid #0a3a0a;border-radius:3px;border-top:3px solid #f4f4f4"></div>
<div style="left:1259px;top:899px;width:15px;height:99px;background:#555753;border:1px solid #2e302c;border-radius:3px"></div>
<div style="left:1262px;top:986px;width:9px;height:4px;background:#d8d8d8;border-radius:2px"></div>
<div style="left:7px;top:973px;width:1235px;height:26px;background:#c6c4c8;"></div>
<div style="left:7px;top:997px;width:1267px;height:21px;background:#c6c4c8;"></div>
<div style="left:8px;top:977px;width:68px;height:20px;border:1px solid #6a696c;border-radius:2px;background:linear-gradient(#e4e2e6,#d6d4d8 2px,#c8c6ca 45%,#c3c1c5 70%,#b3b1b5);"></div>
<div class="t" style="left:32.21px;top:986.93px;font-size:12.60px;color:#000;transform:scaleX(0.9580);transform-origin:50% 0;font-family:'Liberation Sans',sans-serif;">WF</div>
<div style="left:78px;top:977px;width:22px;height:20px;border:1px solid #6a696c;border-radius:2px;background:linear-gradient(#e4e2e6,#d6d4d8 2px,#c8c6ca 45%,#c3c1c5 70%,#b3b1b5);"></div>
<svg style="position:absolute;left:85.25px;top:981.0px;" width="7.5" height="10" viewBox="0 0 7.5 10"><polygon points="7.5,0 0,5.0 7.5,10" fill="#000"/></svg>
<div style="left:101px;top:977px;width:68px;height:20px;border:1px solid #737373;border-radius:2px;background:#fff;box-shadow:inset 0 1px 0 #e9e9e9;"></div>
<div class="t" style="left:125.90px;top:986.93px;font-size:12.60px;color:#000;transform:scaleX(1.0769);transform-origin:50% 0;font-family:'Liberation Sans',sans-serif;">-20</div>
<div style="left:170px;top:977px;width:22px;height:20px;border:1px solid #6a696c;border-radius:2px;background:linear-gradient(#e4e2e6,#d6d4d8 2px,#c8c6ca 45%,#c3c1c5 70%,#b3b1b5);"></div>
<svg style="position:absolute;left:177.25px;top:981.0px;" width="7.5" height="10" viewBox="0 0 7.5 10"><polygon points="0,0 7.5,5.0 0,10" fill="#000"/></svg>
<div style="left:193px;top:977px;width:22px;height:20px;border:1px solid #6a696c;border-radius:2px;background:linear-gradient(#e4e2e6,#d6d4d8 2px,#c8c6ca 45%,#c3c1c5 70%,#b3b1b5);"></div>
<svg style="position:absolute;left:200.25px;top:981.0px;" width="7.5" height="10" viewBox="0 0 7.5 10"><polygon points="7.5,0 0,5.0 7.5,10" fill="#000"/></svg>
<div style="left:217px;top:977px;width:67px;height:20px;border:1px solid #737373;border-radius:2px;background:#fff;box-shadow:inset 0 1px 0 #e9e9e9;"></div>
<div class="t" style="left:243.49px;top:986.93px;font-size:12.60px;color:#000;transform:scaleX(1.0905);transform-origin:50% 0;font-family:'Liberation Sans',sans-serif;">70</div>
<div style="left:285px;top:977px;width:22px;height:20px;border:1px solid #6a696c;border-radius:2px;background:linear-gradient(#e4e2e6,#d6d4d8 2px,#c8c6ca 45%,#c3c1c5 70%,#b3b1b5);"></div>
<svg style="position:absolute;left:292.25px;top:981.0px;" width="7.5" height="10" viewBox="0 0 7.5 10"><polygon points="0,0 7.5,5.0 0,10" fill="#000"/></svg>
<div style="left:310px;top:977px;width:56px;height:20px;border:1px solid #6a696c;border-radius:2px;background:linear-gradient(#e4e2e6,#d6d4d8 2px,#c8c6ca 45%,#c3c1c5 70%,#b3b1b5);"></div>
<div class="t" style="left:331.35px;top:986.93px;font-size:12.60px;color:#000;transform:scaleX(1.1085);transform-origin:50% 0;font-family:'Liberation Sans',sans-serif;">x1</div>
<div style="left:367px;top:977px;width:41px;height:20px;border:1px solid #6a696c;border-radius:2px;background:linear-gradient(#e4e2e6,#d6d4d8 2px,#c8c6ca 45%,#c3c1c5 70%,#b3b1b5);"></div>
<svg style="position:absolute;left:383.0px;top:979.5px;" width="7" height="13" viewBox="0 0 7 13"><polygon points="7,0 0,6.5 7,13" fill="#000"/></svg>
<div style="left:409px;top:977px;width:40px;height:20px;border:1px solid #6a696c;border-radius:2px;background:linear-gradient(#e4e2e6,#d6d4d8 2px,#c8c6ca 45%,#c3c1c5 70%,#b3b1b5);"></div>
<svg style="position:absolute;left:423.0px;top:980px;" width="10" height="13" viewBox="0 0 10 13"><rect x="0" y="0" width="10" height="13" fill="#000"/></svg>
<div style="left:450px;top:977px;width:39px;height:20px;border:1px solid #6a696c;border-radius:2px;background:linear-gradient(#e4e2e6,#d6d4d8 2px,#c8c6ca 45%,#c3c1c5 70%,#b3b1b5);"></div>
<svg style="position:absolute;left:466.0px;top:979.5px;" width="7" height="13" viewBox="0 0 7 13"><polygon points="0,0 7,6.5 0,13" fill="#000"/></svg>
<div style="left:492px;top:977px;width:102px;height:20px;border:1px solid #6a696c;border-radius:2px;background:linear-gradient(#e4e2e6,#d6d4d8 2px,#c8c6ca 45%,#c3c1c5 70%,#b3b1b5);"></div>
<div class="t" style="left:524.45px;top:986.93px;font-size:12.60px;color:#000;transform:scaleX(0.9487);transform-origin:50% 0;font-family:'Liberation Sans',sans-serif;">SLOW</div>
<div style="left:596px;top:977px;width:30px;height:20px;border:1px solid #6a696c;border-radius:2px;background:linear-gradient(#e4e2e6,#d6d4d8 2px,#c8c6ca 45%,#c3c1c5 70%,#b3b1b5);"></div>
<svg style="position:absolute;left:601.0px;top:981px;" width="20" height="10" viewBox="0 0 20 10"><polygon points="10,0 0,5 10,10" fill="#000"/><polygon points="20,0 10,5 20,10" fill="#000"/></svg>
<div style="left:627px;top:977px;width:30px;height:20px;border:1px solid #6a696c;border-radius:2px;background:linear-gradient(#e4e2e6,#d6d4d8 2px,#c8c6ca 45%,#c3c1c5 70%,#b3b1b5);"></div>
<svg style="position:absolute;left:636.75px;top:981.0px;" width="10.5" height="10" viewBox="0 0 10.5 10"><polygon points="10.5,0 0,5.0 10.5,10" fill="#000"/></svg>
<div style="left:658px;top:977px;width:87px;height:20px;border:1px solid #737373;border-radius:2px;background:#fff;box-shadow:inset 0 1px 0 #e9e9e9;"></div>
<div class="t" style="left:686.99px;top:986.93px;font-size:12.60px;color:#000;transform:scaleX(1.0905);transform-origin:50% 0;font-family:'Liberation Sans',sans-serif;">1500</div>
<div style="left:746px;top:977px;width:30px;height:20px;border:1px solid #6a696c;border-radius:2px;background:linear-gradient(#e4e2e6,#d6d4d8 2px,#c8c6ca 45%,#c3c1c5 70%,#b3b1b5);"></div>
<svg style="position:absolute;left:755.75px;top:981.0px;" width="10.5" height="10" viewBox="0 0 10.5 10"><polygon points="0,0 10.5,5.0 0,10" fill="#000"/></svg>
<div style="left:776px;top:977px;width:32px;height:20px;border:1px solid #6a696c;border-radius:2px;background:linear-gradient(#e4e2e6,#d6d4d8 2px,#c8c6ca 45%,#c3c1c5 70%,#b3b1b5);"></div>
<svg style="position:absolute;left:782.0px;top:981px;" width="20" height="10" viewBox="0 0 20 10"><polygon points="0,0 10,5 0,10" fill="#000"/><polygon points="10,0 20,5 10,10" fill="#000"/></svg>
<div style="left:809px;top:977px;width:73px;height:20px;border:1px solid #9a999c;border-radius:2px;background:linear-gradient(#d6d4d8,#c9c7cb 3px,#c3c1c5 60%,#bbb9bd);"></div>
<div class="t" style="left:831.70px;top:986.93px;font-size:12.60px;color:#8f8d91;transform:scaleX(0.9172);transform-origin:50% 0;font-family:'Liberation Sans',sans-serif;">QSY</div>
<div style="left:883px;top:977px;width:91px;height:20px;border:1px solid #6a696c;border-radius:2px;background:linear-gradient(#e4e2e6,#d6d4d8 2px,#c8c6ca 45%,#c3c1c5 70%,#b3b1b5);"></div>
<div class="t" style="left:912.94px;top:986.93px;font-size:12.60px;color:#000;transform:scaleX(1.0538);transform-origin:50% 0;font-family:'Liberation Sans',sans-serif;">Store</div>
<div style="left:976px;top:977px;width:73px;height:20px;border:1px solid #6a696c;border-radius:2px;background:linear-gradient(#e4e2e6,#d6d4d8 2px,#c8c6ca 45%,#c3c1c5 70%,#b3b1b5);"></div>
<div style="left:980px;top:982px;width:6px;height:10px;background:#c8c6c9;border:1px solid #9a999c;border-right-color:#fafafa;border-bottom-color:#fafafa"></div>
<div class="t" style="left:988.10px;top:986.93px;font-size:12.60px;color:#000;transform:scaleX(1.0251);transform-origin:0 0;font-family:'Liberation Sans',sans-serif;">Lk</div>
<div style="left:1149px;top:977px;width:90px;height:20px;border:1px solid #6a696c;border-radius:2px;background:linear-gradient(#e4e2e6,#d6d4d8 2px,#c8c6ca 45%,#c3c1c5 70%,#b3b1b5);"></div>
<div style="left:1153px;top:982px;width:7px;height:10px;background:#c8c6c9;border:1px solid #9a999c;border-right-color:#fafafa;border-bottom-color:#fafafa"></div>
<div class="t" style="left:1161.50px;top:986.93px;font-size:12.60px;color:#000;transform:scaleX(0.9716);transform-origin:0 0;font-family:'Liberation Sans',sans-serif;">T/R</div>
<div style="left:7px;top:998px;width:109px;height:20px;border:1px solid #737373;border-radius:2px;background:#fff;box-shadow:inset 0 1px 0 #e9e9e9;"></div>
<div class="t" style="left:10.10px;top:1007.93px;font-size:12.60px;color:#000;transform:scaleX(0.8954);transform-origin:0 0;font-family:'Liberation Sans',sans-serif;">RTTY</div>
<div style="left:117px;top:998px;width:109px;height:20px;border:1px solid #737373;border-radius:2px;background:#fff;box-shadow:inset 0 1px 0 #e9e9e9;"></div>
<div class="t" style="left:120.10px;top:1007.93px;font-size:12.60px;color:#000;transform:scaleX(1.0958);transform-origin:0 0;font-family:'Liberation Sans',sans-serif;">45 /170</div>
<div style="left:227px;top:998px;width:110px;height:20px;border:1px solid #737373;border-radius:2px;background:#fff;box-shadow:inset 0 1px 0 #e9e9e9;"></div>
<div class="t" style="left:230.10px;top:1007.93px;font-size:12.60px;color:#000;transform:scaleX(1.0765);transform-origin:0 0;font-family:'Liberation Sans',sans-serif;">s/n inf dB</div>
<div style="left:338px;top:998px;width:679px;height:20px;border:1px solid #737373;border-radius:2px;background:#fff;box-shadow:inset 0 1px 0 #e9e9e9;"></div>
<div class="t" style="left:483.80px;top:1008.49px;font-size:11.00px;color:#000;transform:scaleX(0.8995);transform-origin:0 0;font-family:'Liberation Mono',monospace;">|.-120.-110.-100..-90..-80..-70..-60..-50..-40..-30..-20..-10...|</div>
<div style="left:1018px;top:998px;width:18px;height:20px;border:1px solid #6a696c;border-radius:2px;background:linear-gradient(#e4e2e6,#d6d4d8 2px,#c8c6ca 45%,#c3c1c5 70%,#b3b1b5);"></div>
<svg style="position:absolute;left:1022.5px;top:1003.7px;" width="9" height="8" viewBox="0 0 9 8"><polygon points="5,0 0,4 5,8" fill="#000"/><polygon points="9,0 4.5,4 9,8" fill="#000"/></svg>
<div style="left:1037px;top:998px;width:17px;height:20px;border:1px solid #6a696c;border-radius:2px;background:linear-gradient(#e4e2e6,#d6d4d8 2px,#c8c6ca 45%,#c3c1c5 70%,#b3b1b5);"></div>
<svg style="position:absolute;left:1042.5px;top:1003.7px;" width="6" height="8" viewBox="0 0 6 8"><polygon points="6,0 0,4 6,8" fill="#000"/></svg>
<div style="left:1055px;top:998px;width:47px;height:20px;border:1px solid #737373;border-radius:2px;background:#fff;box-shadow:inset 0 1px 0 #e9e9e9;"></div>
<div class="t" style="left:1067.15px;top:1007.93px;font-size:12.60px;color:#000;transform:scaleX(1.0789);transform-origin:50% 0;font-family:'Liberation Sans',sans-serif;">-3.0</div>
<div style="left:1102px;top:998px;width:17px;height:20px;border:1px solid #6a696c;border-radius:2px;background:linear-gradient(#e4e2e6,#d6d4d8 2px,#c8c6ca 45%,#c3c1c5 70%,#b3b1b5);"></div>
<svg style="position:absolute;left:1107.5px;top:1003.7px;" width="6" height="8" viewBox="0 0 6 8"><polygon points="0,0 6,4 0,8" fill="#000"/></svg>
<div style="left:1120px;top:998px;width:18px;height:20px;border:1px solid #6a696c;border-radius:2px;background:linear-gradient(#e4e2e6,#d6d4d8 2px,#c8c6ca 45%,#c3c1c5 70%,#b3b1b5);"></div>
<svg style="position:absolute;left:1124.5px;top:1003.7px;" width="9" height="8" viewBox="0 0 9 8"><polygon points="0,0 4.5,4 0,8" fill="#000"/><polygon points="4,0 9,4 4,8" fill="#000"/></svg>
<svg style="position:absolute;left:1140.5px;top:1000px;" width="12" height="16" viewBox="0 0 12 16"><polygon points="6,0 12,8 6,16 0,8" fill="#000"/><polygon points="6,1.5 10.5,8 6,3" fill="#555"/></svg>
<div style="left:1154px;top:998px;width:60px;height:20px;border:1px solid #6a696c;border-radius:2px;background:linear-gradient(#e4e2e6,#d6d4d8 2px,#c8c6ca 45%,#c3c1c5 70%,#b3b1b5);"></div>
<div style="left:1158px;top:1003px;width:7px;height:10px;background:#00e600;border:1px solid #1a6a1a"></div>
<div class="t" style="left:1166.40px;top:1007.93px;font-size:12.60px;color:#000;transform:scaleX(0.9319);transform-origin:0 0;font-family:'Liberation Sans',sans-serif;">AFC</div>
<div style="left:1215px;top:998px;width:59px;height:20px;border:1px solid #6a696c;border-radius:2px;background:linear-gradient(#e4e2e6,#d6d4d8 2px,#c8c6ca 45%,#c3c1c5 70%,#b3b1b5);"></div>
<div style="left:1219px;top:1003px;width:7px;height:10px;background:#00e600;border:1px solid #1a6a1a"></div>
<div class="t" style="left:1227.60px;top:1007.93px;font-size:12.60px;color:#000;transform:scaleX(0.9426);transform-origin:0 0;font-family:'Liberation Sans',sans-serif;">SQL</div>
<div style="left:115px;top:206px;width:1027px;height:409px;background:#c3d2e6;"></div>
<div style="left:116px;top:207px;width:1026px;height:408px;background:#7399c1;"></div>
<div style="left:1140px;top:207px;width:2px;height:408px;background:#2f4a66;"></div>
<div style="left:116px;top:613px;width:1026px;height:2px;background:#2f4a66;"></div>
<div style="left:120px;top:211px;width:1017px;height:1px;background:#2f4a66;"></div>
<div style="left:120px;top:211px;width:1px;height:19px;background:#2f4a66;"></div>
<div style="left:121px;top:212px;width:1015px;height:1px;background:#d8e4f0;"></div>
<div style="left:121px;top:212px;width:1px;height:17px;background:#d8e4f0;"></div>
<div style="left:121px;top:228px;width:1016px;height:2px;background:#2f4a66;"></div>
<div style="left:137px;top:213px;width:1px;height:15px;background:#2f4a66;"></div>
<div style="left:138px;top:207px;width:1px;height:22px;background:#d8e4f0;"></div>
<div style="left:1101px;top:213px;width:1px;height:15px;background:#2f4a66;"></div>
<div style="left:1102px;top:213px;width:1px;height:16px;background:#d8e4f0;"></div>
<div style="left:1118px;top:207px;width:1px;height:21px;background:#2f4a66;"></div>
<div style="left:1119px;top:207px;width:1px;height:22px;background:#d8e4f0;"></div>
<div style="left:1135px;top:213px;width:1px;height:16px;background:#2f4a66;"></div>
<div style="left:125px;top:218px;width:9px;height:4px;border:1px solid #d8e4f0;border-right-color:#2f4a66;border-bottom-color:#2f4a66"></div>
<div style="left:1108px;top:218px;width:4px;height:4px;border:1px solid #d8e4f0;border-right-color:#2f4a66;border-bottom-color:#2f4a66"></div>
<div style="left:1123px;top:216px;width:9px;height:9px;border:1px solid #2f4a66;border-right-color:#d8e4f0;border-bottom-color:#d8e4f0"></div>
<div class="t" style="left:561.80px;top:221.48px;font-size:11.03px;color:#ffffff;font-weight:bold;transform:scaleX(1.1276);transform-origin:0 0;font-family:'Liberation Sans',sans-serif;">Fldigi configuration</div>
<div style="left:120px;top:229px;width:1px;height:381px;background:#2f4a66;"></div>
<div style="left:120px;top:609px;width:1017px;height:1px;background:#d8e4f0;"></div>
<div style="left:1136px;top:229px;width:1px;height:381px;background:#d8e4f0;"></div>
<div style="left:121px;top:230px;width:1015px;height:379px;background:#c6c4c8;"></div>
<div style="left:121px;top:230px;width:398px;height:348px;background:#ffffff;"></div>
<svg style="position:absolute;left:121px;top:230px;" width="398" height="348" viewBox="0 0 398 348"><g fill="#606060"><rect x="23" y="0" width="1" height="1"/><rect x="23" y="2" width="1" height="1"/><rect x="23" y="4" width="1" height="1"/><rect x="23" y="6" width="1" height="1"/><rect x="23" y="8" width="1" height="1"/><rect x="23" y="10" width="1" height="1"/><rect x="23" y="12" width="1" height="1"/><rect x="23" y="14" width="1" height="1"/><rect x="23" y="16" width="1" height="1"/><rect x="23" y="18" width="1" height="1"/><rect x="23" y="20" width="1" height="1"/><rect x="23" y="22" width="1" height="1"/><rect x="23" y="24" width="1" height="1"/><rect x="23" y="26" width="1" height="1"/><rect x="23" y="28" width="1" height="1"/><rect x="23" y="30" width="1" height="1"/><rect x="23" y="32" width="1" height="1"/><rect x="23" y="34" width="1" height="1"/><rect x="23" y="36" width="1" height="1"/><rect x="23" y="38" width="1" height="1"/><rect x="23" y="40" width="1" height="1"/><rect x="23" y="42" width="1" height="1"/><rect x="23" y="44" width="1" height="1"/><rect x="23" y="46" width="1" height="1"/><rect x="23" y="48" width="1" height="1"/><rect x="23" y="50" width="1" height="1"/><rect x="23" y="52" width="1" height="1"/><rect x="23" y="54" width="1" height="1"/><rect x="23" y="56" width="1" height="1"/><rect x="23" y="58" width="1" height="1"/><rect x="23" y="60" width="1" height="1"/><rect x="23" y="62" width="1" height="1"/><rect x="23" y="64" width="1" height="1"/><rect x="23" y="66" width="1" height="1"/><rect x="23" y="68" width="1" height="1"/><rect x="23" y="70" width="1" height="1"/><rect x="23" y="72" width="1" height="1"/><rect x="23" y="74" width="1" height="1"/><rect x="23" y="76" width="1" height="1"/><rect x="23" y="78" width="1" height="1"/><rect x="23" y="80" width="1" height="1"/><rect x="23" y="82" width="1" height="1"/><rect x="23" y="84" width="1" height="1"/><rect x="23" y="86" width="1" height="1"/><rect x="23" y="88" width="1" height="1"/><rect x="23" y="90" width="1" height="1"/><rect x="23" y="92" width="1" height="1"/><rect x="23" y="94" width="1" height="1"/><rect x="23" y="96" width="1" height="1"/><rect x="23" y="98" width="1" height="1"/><rect x="23" y="100" width="1" height="1"/><rect x="23" y="102" width="1" height="1"/><rect x="23" y="104" width="1" height="1"/><rect x="23" y="106" width="1" height="1"/><rect x="23" y="108" width="1" height="1"/><rect x="23" y="110" width="1" height="1"/><rect x="23" y="112" width="1" height="1"/><rect x="23" y="114" width="1" height="1"/><rect x="23" y="116" width="1" height="1"/><rect x="23" y="118" width="1" height="1"/><rect x="23" y="120" width="1" height="1"/><rect x="23" y="122" width="1" height="1"/><rect x="23" y="124" width="1" height="1"/><rect x="23" y="126" width="1" height="1"/><rect x="23" y="128" width="1" height="1"/><rect x="23" y="130" width="1" height="1"/><rect x="23" y="132" width="1" height="1"/><rect x="23" y="134" width="1" height="1"/><rect x="23" y="136" width="1" height="1"/><rect x="23" y="138" width="1" height="1"/><rect x="23" y="140" width="1" height="1"/><rect x="23" y="142" width="1" height="1"/><rect x="23" y="144" width="1" height="1"/><rect x="23" y="146" width="1" height="1"/><rect x="23" y="148" width="1" height="1"/><rect x="23" y="150" width="1" height="1"/><rect x="23" y="152" width="1" height="1"/><rect x="23" y="154" width="1" height="1"/><rect x="23" y="156" width="1" height="1"/><rect x="23" y="158" width="1" height="1"/><rect x="23" y="160" width="1" height="1"/><rect x="23" y="162" width="1" height="1"/><rect x="23" y="164" width="1" height="1"/><rect x="23" y="166" width="1" height="1"/><rect x="23" y="168" width="1" height="1"/><rect x="23" y="170" width="1" height="1"/><rect x="23" y="172" width="1" height="1"/><rect x="23" y="174" width="1" height="1"/><rect x="23" y="176" width="1" height="1"/><rect x="23" y="178" width="1" height="1"/><rect x="23" y="180" width="1" height="1"/><rect x="23" y="182" width="1" height="1"/><rect x="23" y="184" width="1" height="1"/><rect x="23" y="186" width="1" height="1"/><rect x="23" y="188" width="1" height="1"/><rect x="23" y="190" width="1" height="1"/><rect x="23" y="192" width="1" height="1"/><rect x="23" y="194" width="1" height="1"/><rect x="23" y="196" width="1" height="1"/><rect x="23" y="198" width="1" height="1"/><rect x="23" y="200" width="1" height="1"/><rect x="23" y="202" width="1" height="1"/><rect x="23" y="204" width="1" height="1"/><rect x="23" y="206" width="1" height="1"/><rect x="23" y="208" width="1" height="1"/><rect x="23" y="210" width="1" height="1"/><rect x="23" y="212" width="1" height="1"/><rect x="23" y="214" width="1" height="1"/><rect x="23" y="216" width="1" height="1"/><rect x="23" y="218" width="1" height="1"/><rect x="23" y="220" width="1" height="1"/><rect x="23" y="222" width="1" height="1"/><rect x="23" y="224" width="1" height="1"/><rect x="23" y="226" width="1" height="1"/><rect x="23" y="228" width="1" height="1"/><rect x="23" y="230" width="1" height="1"/><rect x="23" y="232" width="1" height="1"/><rect x="23" y="234" width="1" height="1"/><rect x="23" y="236" width="1" height="1"/><rect x="23" y="238" width="1" height="1"/><rect x="23" y="240" width="1" height="1"/><rect x="23" y="242" width="1" height="1"/><rect x="23" y="244" width="1" height="1"/><rect x="23" y="246" width="1" height="1"/><rect x="23" y="248" width="1" height="1"/><rect x="23" y="250" width="1" height="1"/><rect x="23" y="252" width="1" height="1"/><rect x="23" y="254" width="1" height="1"/><rect x="23" y="256" width="1" height="1"/><rect x="23" y="258" width="1" height="1"/><rect x="23" y="260" width="1" height="1"/><rect x="23" y="262" width="1" height="1"/><rect x="23" y="264" width="1" height="1"/><rect x="23" y="266" width="1" height="1"/><rect x="23" y="268" width="1" height="1"/><rect x="23" y="270" width="1" height="1"/><rect x="23" y="272" width="1" height="1"/><rect x="23" y="274" width="1" height="1"/><rect x="23" y="276" width="1" height="1"/><rect x="23" y="278" width="1" height="1"/><rect x="23" y="280" width="1" height="1"/><rect x="23" y="282" width="1" height="1"/><rect x="23" y="284" width="1" height="1"/><rect x="23" y="286" width="1" height="1"/><rect x="23" y="288" width="1" height="1"/><rect x="23" y="290" width="1" height="1"/><rect x="23" y="292" width="1" height="1"/><rect x="23" y="294" width="1" height="1"/><rect x="23" y="296" width="1" height="1"/><rect x="23" y="298" width="1" height="1"/><rect x="23" y="300" width="1" height="1"/><rect x="23" y="302" width="1" height="1"/><rect x="23" y="304" width="1" height="1"/><rect x="23" y="306" width="1" height="1"/><rect x="23" y="308" width="1" height="1"/><rect x="23" y="310" width="1" height="1"/><rect x="23" y="312" width="1" height="1"/><rect x="23" y="314" width="1" height="1"/><rect x="23" y="316" width="1" height="1"/><rect x="23" y="318" width="1" height="1"/><rect x="23" y="320" width="1" height="1"/><rect x="23" y="322" width="1" height="1"/><rect x="23" y="324" width="1" height="1"/><rect x="23" y="326" width="1" height="1"/><rect x="23" y="328" width="1" height="1"/><rect x="23" y="330" width="1" height="1"/><rect x="23" y="332" width="1" height="1"/><rect x="23" y="334" width="1" height="1"/><rect x="23" y="336" width="1" height="1"/><rect x="23" y="338" width="1" height="1"/><rect x="23" y="340" width="1" height="1"/><rect x="23" y="342" width="1" height="1"/><rect x="23" y="344" width="1" height="1"/><rect x="23" y="346" width="1" height="1"/><rect x="23" y="348" width="1" height="1"/><rect x="34" y="26" width="1" height="1"/><rect x="34" y="28" width="1" height="1"/><rect x="34" y="30" width="1" height="1"/><rect x="34" y="32" width="1" height="1"/><rect x="34" y="34" width="1" height="1"/><rect x="34" y="36" width="1" height="1"/><rect x="34" y="38" width="1" height="1"/><rect x="34" y="40" width="1" height="1"/><rect x="34" y="42" width="1" height="1"/><rect x="34" y="44" width="1" height="1"/><rect x="34" y="46" width="1" height="1"/><rect x="34" y="48" width="1" height="1"/><rect x="34" y="50" width="1" height="1"/><rect x="34" y="52" width="1" height="1"/><rect x="34" y="54" width="1" height="1"/><rect x="34" y="56" width="1" height="1"/><rect x="34" y="58" width="1" height="1"/><rect x="34" y="60" width="1" height="1"/><rect x="34" y="62" width="1" height="1"/><rect x="34" y="64" width="1" height="1"/><rect x="34" y="66" width="1" height="1"/><rect x="34" y="68" width="1" height="1"/><rect x="34" y="70" width="1" height="1"/><rect x="34" y="72" width="1" height="1"/><rect x="34" y="74" width="1" height="1"/><rect x="34" y="76" width="1" height="1"/><rect x="34" y="78" width="1" height="1"/><rect x="34" y="80" width="1" height="1"/><rect x="34" y="82" width="1" height="1"/><rect x="34" y="84" width="1" height="1"/><rect x="34" y="86" width="1" height="1"/><rect x="34" y="88" width="1" height="1"/><rect x="34" y="90" width="1" height="1"/><rect x="34" y="92" width="1" height="1"/><rect x="34" y="94" width="1" height="1"/><rect x="34" y="96" width="1" height="1"/><rect x="34" y="98" width="1" height="1"/><rect x="34" y="100" width="1" height="1"/><rect x="34" y="102" width="1" height="1"/><rect x="34" y="104" width="1" height="1"/><rect x="34" y="106" width="1" height="1"/><rect x="34" y="108" width="1" height="1"/><rect x="34" y="110" width="1" height="1"/><rect x="34" y="112" width="1" height="1"/><rect x="34" y="114" width="1" height="1"/><rect x="34" y="116" width="1" height="1"/><rect x="34" y="138" width="1" height="1"/><rect x="34" y="140" width="1" height="1"/><rect x="34" y="142" width="1" height="1"/><rect x="34" y="144" width="1" height="1"/><rect x="34" y="146" width="1" height="1"/><rect x="34" y="148" width="1" height="1"/><rect x="34" y="150" width="1" height="1"/><rect x="34" y="152" width="1" height="1"/><rect x="34" y="154" width="1" height="1"/><rect x="34" y="156" width="1" height="1"/><rect x="34" y="158" width="1" height="1"/><rect x="34" y="160" width="1" height="1"/><rect x="34" y="162" width="1" height="1"/><rect x="34" y="164" width="1" height="1"/><rect x="34" y="166" width="1" height="1"/><rect x="34" y="168" width="1" height="1"/><rect x="34" y="170" width="1" height="1"/><rect x="34" y="172" width="1" height="1"/><rect x="34" y="174" width="1" height="1"/><rect x="34" y="176" width="1" height="1"/><rect x="34" y="178" width="1" height="1"/><rect x="34" y="180" width="1" height="1"/><rect x="34" y="182" width="1" height="1"/><rect x="34" y="184" width="1" height="1"/><rect x="34" y="186" width="1" height="1"/><rect x="34" y="188" width="1" height="1"/><rect x="34" y="190" width="1" height="1"/><rect x="34" y="192" width="1" height="1"/><rect x="34" y="194" width="1" height="1"/><rect x="34" y="196" width="1" height="1"/><rect x="34" y="198" width="1" height="1"/><rect x="34" y="200" width="1" height="1"/><rect x="34" y="202" width="1" height="1"/><rect x="34" y="204" width="1" height="1"/><rect x="34" y="206" width="1" height="1"/><rect x="34" y="208" width="1" height="1"/><rect x="34" y="210" width="1" height="1"/><rect x="34" y="212" width="1" height="1"/><rect x="34" y="214" width="1" height="1"/><rect x="34" y="216" width="1" height="1"/><rect x="34" y="218" width="1" height="1"/><rect x="34" y="220" width="1" height="1"/><rect x="34" y="222" width="1" height="1"/><rect x="34" y="224" width="1" height="1"/><rect x="34" y="226" width="1" height="1"/><rect x="34" y="228" width="1" height="1"/><rect x="34" y="250" width="1" height="1"/><rect x="34" y="252" width="1" height="1"/><rect x="34" y="254" width="1" height="1"/><rect x="34" y="256" width="1" height="1"/><rect x="34" y="258" width="1" height="1"/><rect x="34" y="260" width="1" height="1"/><rect x="34" y="262" width="1" height="1"/><rect x="34" y="264" width="1" height="1"/><rect x="34" y="266" width="1" height="1"/><rect x="34" y="268" width="1" height="1"/><rect x="34" y="270" width="1" height="1"/><rect x="34" y="272" width="1" height="1"/><rect x="34" y="274" width="1" height="1"/><rect x="34" y="276" width="1" height="1"/><rect x="34" y="278" width="1" height="1"/><rect x="34" y="280" width="1" height="1"/><rect x="34" y="282" width="1" height="1"/><rect x="34" y="284" width="1" height="1"/><rect x="34" y="286" width="1" height="1"/><rect x="34" y="288" width="1" height="1"/><rect x="34" y="290" width="1" height="1"/><rect x="34" y="292" width="1" height="1"/><rect x="34" y="294" width="1" height="1"/><rect x="34" y="296" width="1" height="1"/><rect x="34" y="298" width="1" height="1"/><rect x="34" y="300" width="1" height="1"/><rect x="34" y="302" width="1" height="1"/><rect x="34" y="304" width="1" height="1"/><rect x="34" y="306" width="1" height="1"/><rect x="34" y="308" width="1" height="1"/><rect x="34" y="310" width="1" height="1"/><rect x="34" y="312" width="1" height="1"/><rect x="34" y="314" width="1" height="1"/><rect x="34" y="316" width="1" height="1"/><rect x="34" y="318" width="1" height="1"/><rect x="34" y="320" width="1" height="1"/><rect x="34" y="322" width="1" height="1"/><rect x="34" y="324" width="1" height="1"/><rect x="34" y="326" width="1" height="1"/><rect x="34" y="328" width="1" height="1"/><rect x="34" y="330" width="1" height="1"/><rect x="34" y="332" width="1" height="1"/><rect x="34" y="334" width="1" height="1"/><rect x="34" y="336" width="1" height="1"/><rect x="34" y="338" width="1" height="1"/><rect x="34" y="340" width="1" height="1"/><rect x="34" y="342" width="1" height="1"/><rect x="34" y="344" width="1" height="1"/><rect x="34" y="346" width="1" height="1"/><rect x="34" y="348" width="1" height="1"/><rect x="45" y="266" width="1" height="1"/><rect x="45" y="268" width="1" height="1"/><rect x="45" y="270" width="1" height="1"/><rect x="45" y="272" width="1" height="1"/><rect x="45" y="274" width="1" height="1"/><rect x="45" y="276" width="1" height="1"/><rect x="45" y="278" width="1" height="1"/><rect x="45" y="280" width="1" height="1"/><rect x="45" y="282" width="1" height="1"/><rect x="45" y="284" width="1" height="1"/><rect x="45" y="286" width="1" height="1"/><rect x="45" y="288" width="1" height="1"/><rect x="45" y="290" width="1" height="1"/><rect x="45" y="292" width="1" height="1"/><rect x="45" y="294" width="1" height="1"/><rect x="45" y="296" width="1" height="1"/><rect x="45" y="298" width="1" height="1"/><rect x="45" y="300" width="1" height="1"/><rect x="45" y="302" width="1" height="1"/><rect x="45" y="304" width="1" height="1"/><rect x="45" y="306" width="1" height="1"/><rect x="45" y="308" width="1" height="1"/><rect x="23" y="4" width="1" height="1"/><rect x="25" y="4" width="1" height="1"/><rect x="27" y="4" width="1" height="1"/><rect x="29" y="4" width="1" height="1"/><rect x="31" y="4" width="1" height="1"/><rect x="33" y="4" width="1" height="1"/><rect x="35" y="4" width="1" height="1"/><rect x="37" y="4" width="1" height="1"/><rect x="39" y="4" width="1" height="1"/><rect x="23" y="20" width="1" height="1"/><rect x="25" y="20" width="1" height="1"/><rect x="27" y="20" width="1" height="1"/><rect x="35" y="36" width="1" height="1"/><rect x="37" y="36" width="1" height="1"/><rect x="39" y="36" width="1" height="1"/><rect x="41" y="36" width="1" height="1"/><rect x="43" y="36" width="1" height="1"/><rect x="45" y="36" width="1" height="1"/><rect x="47" y="36" width="1" height="1"/><rect x="49" y="36" width="1" height="1"/><rect x="51" y="36" width="1" height="1"/><rect x="35" y="52" width="1" height="1"/><rect x="37" y="52" width="1" height="1"/><rect x="39" y="52" width="1" height="1"/><rect x="41" y="52" width="1" height="1"/><rect x="43" y="52" width="1" height="1"/><rect x="45" y="52" width="1" height="1"/><rect x="47" y="52" width="1" height="1"/><rect x="49" y="52" width="1" height="1"/><rect x="51" y="52" width="1" height="1"/><rect x="35" y="68" width="1" height="1"/><rect x="37" y="68" width="1" height="1"/><rect x="39" y="68" width="1" height="1"/><rect x="41" y="68" width="1" height="1"/><rect x="43" y="68" width="1" height="1"/><rect x="45" y="68" width="1" height="1"/><rect x="47" y="68" width="1" height="1"/><rect x="49" y="68" width="1" height="1"/><rect x="51" y="68" width="1" height="1"/><rect x="35" y="84" width="1" height="1"/><rect x="37" y="84" width="1" height="1"/><rect x="39" y="84" width="1" height="1"/><rect x="41" y="84" width="1" height="1"/><rect x="43" y="84" width="1" height="1"/><rect x="45" y="84" width="1" height="1"/><rect x="47" y="84" width="1" height="1"/><rect x="49" y="84" width="1" height="1"/><rect x="51" y="84" width="1" height="1"/><rect x="35" y="100" width="1" height="1"/><rect x="37" y="100" width="1" height="1"/><rect x="39" y="100" width="1" height="1"/><rect x="41" y="100" width="1" height="1"/><rect x="43" y="100" width="1" height="1"/><rect x="45" y="100" width="1" height="1"/><rect x="47" y="100" width="1" height="1"/><rect x="49" y="100" width="1" height="1"/><rect x="51" y="100" width="1" height="1"/><rect x="35" y="116" width="1" height="1"/><rect x="37" y="116" width="1" height="1"/><rect x="39" y="116" width="1" height="1"/><rect x="41" y="116" width="1" height="1"/><rect x="43" y="116" width="1" height="1"/><rect x="45" y="116" width="1" height="1"/><rect x="47" y="116" width="1" height="1"/><rect x="49" y="116" width="1" height="1"/><rect x="51" y="116" width="1" height="1"/><rect x="23" y="132" width="1" height="1"/><rect x="25" y="132" width="1" height="1"/><rect x="27" y="132" width="1" height="1"/><rect x="35" y="148" width="1" height="1"/><rect x="37" y="148" width="1" height="1"/><rect x="39" y="148" width="1" height="1"/><rect x="41" y="148" width="1" height="1"/><rect x="43" y="148" width="1" height="1"/><rect x="45" y="148" width="1" height="1"/><rect x="47" y="148" width="1" height="1"/><rect x="49" y="148" width="1" height="1"/><rect x="51" y="148" width="1" height="1"/><rect x="35" y="164" width="1" height="1"/><rect x="37" y="164" width="1" height="1"/><rect x="39" y="164" width="1" height="1"/><rect x="41" y="164" width="1" height="1"/><rect x="43" y="164" width="1" height="1"/><rect x="45" y="164" width="1" height="1"/><rect x="47" y="164" width="1" height="1"/><rect x="49" y="164" width="1" height="1"/><rect x="51" y="164" width="1" height="1"/><rect x="35" y="180" width="1" height="1"/><rect x="37" y="180" width="1" height="1"/><rect x="39" y="180" width="1" height="1"/><rect x="41" y="180" width="1" height="1"/><rect x="43" y="180" width="1" height="1"/><rect x="45" y="180" width="1" height="1"/><rect x="47" y="180" width="1" height="1"/><rect x="49" y="180" width="1" height="1"/><rect x="51" y="180" width="1" height="1"/><rect x="35" y="196" width="1" height="1"/><rect x="37" y="196" width="1" height="1"/><rect x="39" y="196" width="1" height="1"/><rect x="41" y="196" width="1" height="1"/><rect x="43" y="196" width="1" height="1"/><rect x="45" y="196" width="1" height="1"/><rect x="47" y="196" width="1" height="1"/><rect x="49" y="196" width="1" height="1"/><rect x="51" y="196" width="1" height="1"/><rect x="35" y="212" width="1" height="1"/><rect x="37" y="212" width="1" height="1"/><rect x="39" y="212" width="1" height="1"/><rect x="41" y="212" width="1" height="1"/><rect x="43" y="212" width="1" height="1"/><rect x="45" y="212" width="1" height="1"/><rect x="47" y="212" width="1" height="1"/><rect x="49" y="212" width="1" height="1"/><rect x="51" y="212" width="1" height="1"/><rect x="35" y="228" width="1" height="1"/><rect x="37" y="228" width="1" height="1"/><rect x="39" y="228" width="1" height="1"/><rect x="41" y="228" width="1" height="1"/><rect x="43" y="228" width="1" height="1"/><rect x="45" y="228" width="1" height="1"/><rect x="47" y="228" width="1" height="1"/><rect x="49" y="228" width="1" height="1"/><rect x="51" y="228" width="1" height="1"/><rect x="23" y="244" width="1" height="1"/><rect x="25" y="244" width="1" height="1"/><rect x="27" y="244" width="1" height="1"/><rect x="35" y="260" width="1" height="1"/><rect x="37" y="260" width="1" height="1"/><rect x="39" y="260" width="1" height="1"/><rect x="45" y="276" width="1" height="1"/><rect x="47" y="276" width="1" height="1"/><rect x="49" y="276" width="1" height="1"/><rect x="51" y="276" width="1" height="1"/><rect x="53" y="276" width="1" height="1"/><rect x="55" y="276" width="1" height="1"/><rect x="57" y="276" width="1" height="1"/><rect x="59" y="276" width="1" height="1"/><rect x="61" y="276" width="1" height="1"/><rect x="45" y="292" width="1" height="1"/><rect x="47" y="292" width="1" height="1"/><rect x="49" y="292" width="1" height="1"/><rect x="51" y="292" width="1" height="1"/><rect x="53" y="292" width="1" height="1"/><rect x="55" y="292" width="1" height="1"/><rect x="57" y="292" width="1" height="1"/><rect x="59" y="292" width="1" height="1"/><rect x="61" y="292" width="1" height="1"/><rect x="45" y="308" width="1" height="1"/><rect x="47" y="308" width="1" height="1"/><rect x="49" y="308" width="1" height="1"/><rect x="51" y="308" width="1" height="1"/><rect x="53" y="308" width="1" height="1"/><rect x="55" y="308" width="1" height="1"/><rect x="57" y="308" width="1" height="1"/><rect x="59" y="308" width="1" height="1"/><rect x="61" y="308" width="1" height="1"/><rect x="35" y="324" width="1" height="1"/><rect x="37" y="324" width="1" height="1"/><rect x="39" y="324" width="1" height="1"/><rect x="41" y="324" width="1" height="1"/><rect x="43" y="324" width="1" height="1"/><rect x="45" y="324" width="1" height="1"/><rect x="47" y="324" width="1" height="1"/><rect x="49" y="324" width="1" height="1"/><rect x="51" y="324" width="1" height="1"/><rect x="35" y="340" width="1" height="1"/><rect x="37" y="340" width="1" height="1"/><rect x="39" y="340" width="1" height="1"/><rect x="41" y="340" width="1" height="1"/><rect x="43" y="340" width="1" height="1"/><rect x="45" y="340" width="1" height="1"/><rect x="47" y="340" width="1" height="1"/><rect x="49" y="340" width="1" height="1"/><rect x="51" y="340" width="1" height="1"/></g></svg>
<div style="left:173px;top:305px;width:346px;height:16px;background:#000080;"></div>
<div class="t" style="left:164.60px;top:233.93px;font-size:12.60px;color:#000;transform:scaleX(1.0735);transform-origin:0 0;font-family:'Liberation Sans',sans-serif;">Operator-Station</div>
<div style="left:150px;top:245px;width:11px;height:11px;background:#ffffff;border:1px solid #000"></div>
<div style="left:152px;top:250px;width:7px;height:1px;background:#000;"></div>
<div class="t" style="left:164.60px;top:249.93px;font-size:12.60px;color:#000;transform:scaleX(1.0549);transform-origin:0 0;font-family:'Liberation Sans',sans-serif;">Rig Control</div>
<div class="t" style="left:175.30px;top:265.93px;font-size:12.60px;color:#000;transform:scaleX(1.1552);transform-origin:0 0;font-family:'Liberation Sans',sans-serif;">flrig</div>
<div class="t" style="left:175.30px;top:281.93px;font-size:12.60px;color:#000;transform:scaleX(1.0594);transform-origin:0 0;font-family:'Liberation Sans',sans-serif;">CAT (rigcat)</div>
<div class="t" style="left:175.30px;top:297.93px;font-size:12.60px;color:#000;transform:scaleX(0.9373);transform-origin:0 0;font-family:'Liberation Sans',sans-serif;">GPIO</div>
<div class="t" style="left:175.30px;top:313.93px;font-size:12.60px;color:#ffffff;transform:scaleX(1.0804);transform-origin:0 0;font-family:'Liberation Sans',sans-serif;">Hamlib</div>
<div class="t" style="left:175.30px;top:329.93px;font-size:12.60px;color:#000;transform:scaleX(1.0192);transform-origin:0 0;font-family:'Liberation Sans',sans-serif;">Hardware PTT</div>
<div class="t" style="left:175.30px;top:345.93px;font-size:12.60px;color:#000;transform:scaleX(0.9914);transform-origin:0 0;font-family:'Liberation Sans',sans-serif;">C-Media PTT</div>
<div style="left:150px;top:357px;width:11px;height:11px;background:#ffffff;border:1px solid #000"></div>
<div style="left:152px;top:362px;width:7px;height:1px;background:#000;"></div>
<div class="t" style="left:164.60px;top:361.93px;font-size:12.60px;color:#000;transform:scaleX(1.0523);transform-origin:0 0;font-family:'Liberation Sans',sans-serif;">Soundcard</div>
<div class="t" style="left:175.30px;top:377.93px;font-size:12.60px;color:#000;transform:scaleX(1.0809);transform-origin:0 0;font-family:'Liberation Sans',sans-serif;">Alerts</div>
<div class="t" style="left:175.30px;top:393.93px;font-size:12.60px;color:#000;transform:scaleX(1.0554);transform-origin:0 0;font-family:'Liberation Sans',sans-serif;">Devices</div>
<div class="t" style="left:175.30px;top:409.93px;font-size:12.60px;color:#000;transform:scaleX(1.0763);transform-origin:0 0;font-family:'Liberation Sans',sans-serif;">Right channel</div>
<div class="t" style="left:175.30px;top:425.93px;font-size:12.60px;color:#000;transform:scaleX(1.0815);transform-origin:0 0;font-family:'Liberation Sans',sans-serif;">Settings</div>
<div class="t" style="left:175.30px;top:441.93px;font-size:12.60px;color:#000;transform:scaleX(1.0546);transform-origin:0 0;font-family:'Liberation Sans',sans-serif;">Signal Level</div>
<div class="t" style="left:175.30px;top:457.93px;font-size:12.60px;color:#000;transform:scaleX(1.0800);transform-origin:0 0;font-family:'Liberation Sans',sans-serif;">Wav file recording</div>
<div style="left:150px;top:469px;width:11px;height:11px;background:#ffffff;border:1px solid #000"></div>
<div style="left:152px;top:474px;width:7px;height:1px;background:#000;"></div>
<div class="t" style="left:164.60px;top:473.93px;font-size:12.60px;color:#000;transform:scaleX(0.9784);transform-origin:0 0;font-family:'Liberation Sans',sans-serif;">UI</div>
<div style="left:161px;top:485px;width:11px;height:11px;background:#ffffff;border:1px solid #000"></div>
<div style="left:163px;top:490px;width:7px;height:1px;background:#000;"></div>
<div class="t" style="left:175.30px;top:489.93px;font-size:12.60px;color:#000;transform:scaleX(1.0526);transform-origin:0 0;font-family:'Liberation Sans',sans-serif;">Browser</div>
<div class="t" style="left:186.40px;top:505.93px;font-size:12.60px;color:#000;transform:scaleX(1.0432);transform-origin:0 0;font-family:'Liberation Sans',sans-serif;">Channels</div>
<div class="t" style="left:186.40px;top:521.93px;font-size:12.60px;color:#000;transform:scaleX(1.0321);transform-origin:0 0;font-family:'Liberation Sans',sans-serif;">Colors</div>
<div class="t" style="left:186.40px;top:537.93px;font-size:12.60px;color:#000;transform:scaleX(1.0802);transform-origin:0 0;font-family:'Liberation Sans',sans-serif;">Detection Level</div>
<div class="t" style="left:175.30px;top:553.93px;font-size:12.60px;color:#000;transform:scaleX(1.0556);transform-origin:0 0;font-family:'Liberation Sans',sans-serif;">General</div>
<div class="t" style="left:175.30px;top:569.93px;font-size:12.60px;color:#000;transform:scaleX(1.0771);transform-origin:0 0;font-family:'Liberation Sans',sans-serif;">Macro buttons</div>
<div style="left:121px;top:230px;width:398px;height:1px;background:#ffffff;"></div>
<div style="left:519px;top:230px;width:15px;height:348px;background:#939592;"></div>
<div style="left:519px;top:231px;width:15px;height:15px;border:1px solid #5f5e61;border-radius:2px;background:linear-gradient(#e4e2e6,#d6d4d8 2px,#c8c6ca 45%,#c3c1c5 70%,#b3b1b5);"></div>
<svg style="position:absolute;left:522.5px;top:236.0px;" width="8" height="5" viewBox="0 0 8 5"><polygon points="0,4.5 4,0.3 8,4.5 6.3,4.5 4,2.3 1.7,4.5" fill="#000" stroke="#000" stroke-width=".6"/></svg>
<div style="left:519px;top:439px;width:15px;height:104px;border:1px solid #616063;border-radius:2px;background:linear-gradient(90deg,#dddbe0,#c8c6ca 3px,#c6c4c8 70%,#b8b6ba);"></div>
<svg style="position:absolute;left:522.0px;top:481.5px;" width="10" height="21" viewBox="0 0 10 21"><path d="M0.5 7.5 L8.5 0.5" stroke="#6f6e71" stroke-width="1" stroke-dasharray="1,0.6"/><path d="M1 8.5 L9 1.5" stroke="#fafafa" stroke-width="0.8" opacity=".7"/><path d="M0.5 13.5 L8.5 6.5" stroke="#6f6e71" stroke-width="1" stroke-dasharray="1,0.6"/><path d="M1 14.5 L9 7.5" stroke="#fafafa" stroke-width="0.8" opacity=".7"/><path d="M0.5 19.5 L8.5 12.5" stroke="#6f6e71" stroke-width="1" stroke-dasharray="1,0.6"/><path d="M1 20.5 L9 13.5" stroke="#fafafa" stroke-width="0.8" opacity=".7"/></svg>
<div style="left:519px;top:562px;width:15px;height:15px;border:1px solid #5f5e61;border-radius:2px;background:linear-gradient(#e4e2e6,#d6d4d8 2px,#c8c6ca 45%,#c3c1c5 70%,#b3b1b5);"></div>
<svg style="position:absolute;left:522.5px;top:567.0px;" width="8" height="5" viewBox="0 0 8 5"><polygon points="0,0.5 4,4.7 8,0.5 6.3,0.5 4,2.7 1.7,0.5" fill="#000" stroke="#000" stroke-width=".6"/></svg>
<div style="left:535px;top:230px;width:601px;height:349px;border:1px solid #fff"></div>
<div style="left:534px;top:229px;width:601px;height:349px;border:1px solid #6e6d70"></div>
<div style="left:536px;top:231px;width:599px;height:346px;background:#c6c4c8;"></div>
<div class="t" style="left:539.90px;top:238.93px;font-size:12.60px;color:#000;transform:scaleX(1.0677);transform-origin:0 0;font-family:'Liberation Sans',sans-serif;">Rig Control/Hamlib</div>
<div style="left:786px;top:250px;width:100px;height:20px;border:1px dotted #202020"></div>
<div style="left:788px;top:254px;width:12px;height:12px;background:#ffffff;border:1px solid #626164;border-radius:3px"></div>
<svg style="position:absolute;left:790px;top:256px;" width="8" height="8" viewBox="0 0 8 8"><path d="M1 3.5 L3.5 6.5 L7 1" fill="none" stroke="#00007a" stroke-width="2"/></svg>
<div class="t" style="left:801.60px;top:259.93px;font-size:12.60px;color:#000;transform:scaleX(1.0534);transform-origin:0 0;font-family:'Liberation Sans',sans-serif;">Use Hamlib</div>
<div style="left:1032px;top:248px;width:80px;height:24px;border:1px solid #6a696c;border-radius:2px;background:linear-gradient(#e4e2e6,#d6d4d8 2px,#c8c6ca 45%,#c3c1c5 70%,#b3b1b5);"></div>
<div class="t" style="left:1048.89px;top:259.93px;font-size:12.60px;color:#000;transform:scaleX(1.0838);transform-origin:50% 0;font-family:'Liberation Sans',sans-serif;">Defaults</div>
<div style="left:542px;top:281px;width:585px;height:292px;border:1px solid #fff"></div>
<div style="left:541px;top:280px;width:585px;height:292px;border:1px solid #6e6d70"></div>
<div style="left:543px;top:282px;width:582px;height:289px;background:#c6c4c8;"></div>
<div class="t" style="left:550.89px;top:299.93px;font-size:12.60px;color:#000;transform:scaleX(1.0418);transform-origin:100% 0;font-family:'Liberation Sans',sans-serif;">Rig:</div>
<div style="left:577px;top:290px;width:228px;height:22px;border:1px solid #737373;border-radius:2px;background:#fff;box-shadow:inset 0 1px 0 #e9e9e9;"></div>
<div class="t" style="left:581.10px;top:300.93px;font-size:12.60px;color:#000;transform:scaleX(1.0493);transform-origin:0 0;font-family:'Liberation Sans',sans-serif;">Icom IC-706MkIIG  (Stable)</div>
<div style="left:804px;top:290px;width:23px;height:22px;border:1px solid #6a696c;border-radius:2px;background:linear-gradient(#e4e2e6,#d6d4d8 2px,#c8c6ca 45%,#c3c1c5 70%,#b3b1b5);"></div>
<svg style="position:absolute;left:809.5px;top:297.0px;" width="13" height="7" viewBox="0 0 13 7"><polygon points="0,0 13,0 6.5,7" fill="#000"/></svg>
<div class="t" style="left:846.99px;top:299.93px;font-size:12.60px;color:#000;transform:scaleX(1.0733);transform-origin:100% 0;font-family:'Liberation Sans',sans-serif;">Device:</div>
<div style="left:892px;top:290px;width:198px;height:22px;border:1px solid #737373;border-radius:2px;background:#fff;box-shadow:inset 0 1px 0 #e9e9e9;"></div>
<div class="t" style="left:894.30px;top:300.93px;font-size:12.60px;color:#000;transform:scaleX(1.0726);transform-origin:0 0;font-family:'Liberation Sans',sans-serif;">/dev/ttyACM0</div>
<div style="left:1089px;top:290px;width:23px;height:22px;border:1px solid #6a696c;border-radius:2px;background:linear-gradient(#e4e2e6,#d6d4d8 2px,#c8c6ca 45%,#c3c1c5 70%,#b3b1b5);"></div>
<svg style="position:absolute;left:1094.5px;top:297.0px;" width="13" height="7" viewBox="0 0 13 7"><polygon points="0,0 13,0 6.5,7" fill="#000"/></svg>
<div class="t" style="left:575.60px;top:322.93px;font-size:12.60px;color:#000;transform:scaleX(1.0477);transform-origin:0 0;font-family:'Liberation Sans',sans-serif;">Retries</div>
<div style="left:576px;top:330px;width:70px;height:24px;border:1px solid #737373;border-radius:2px;background:#fff;box-shadow:inset 0 1px 0 #e9e9e9;"></div>
<div class="t" style="left:578.60px;top:341.93px;font-size:12.60px;color:#000;transform:scaleX(1.0905);transform-origin:0 0;font-family:'Liberation Sans',sans-serif;">3</div>
<div class="t" style="left:715.50px;top:322.93px;font-size:12.60px;color:#000;transform:scaleX(1.0814);transform-origin:0 0;font-family:'Liberation Sans',sans-serif;">Timeout (msec)</div>
<div style="left:716px;top:330px;width:70px;height:24px;border:1px solid #737373;border-radius:2px;background:#fff;box-shadow:inset 0 1px 0 #e9e9e9;"></div>
<div class="t" style="left:718.60px;top:341.93px;font-size:12.60px;color:#000;transform:scaleX(1.0905);transform-origin:0 0;font-family:'Liberation Sans',sans-serif;">1000</div>
<div class="t" style="left:575.60px;top:365.93px;font-size:12.60px;color:#000;transform:scaleX(1.0825);transform-origin:0 0;font-family:'Liberation Sans',sans-serif;">Write delay (msec)</div>
<div style="left:576px;top:374px;width:70px;height:23px;border:1px solid #737373;border-radius:2px;background:#fff;box-shadow:inset 0 1px 0 #e9e9e9;"></div>
<div class="t" style="left:578.60px;top:385.93px;font-size:12.60px;color:#000;transform:scaleX(1.0905);transform-origin:0 0;font-family:'Liberation Sans',sans-serif;">0</div>
<div class="t" style="left:715.50px;top:365.93px;font-size:12.60px;color:#000;transform:scaleX(1.0756);transform-origin:0 0;font-family:'Liberation Sans',sans-serif;">Post write delay (msec)</div>
<div style="left:716px;top:374px;width:70px;height:23px;border:1px solid #737373;border-radius:2px;background:#fff;box-shadow:inset 0 1px 0 #e9e9e9;"></div>
<div class="t" style="left:718.60px;top:385.93px;font-size:12.60px;color:#000;transform:scaleX(1.0905);transform-origin:0 0;font-family:'Liberation Sans',sans-serif;">0</div>
<div class="t" style="left:951.36px;top:328.93px;font-size:12.60px;color:#000;transform:scaleX(1.0850);transform-origin:100% 0;font-family:'Liberation Sans',sans-serif;">Baud rate:</div>
<div style="left:1014px;top:318px;width:76px;height:22px;border:1px solid #737373;border-radius:2px;background:#fff;box-shadow:inset 0 1px 0 #e9e9e9;"></div>
<div class="t" style="left:1017.90px;top:328.93px;font-size:12.60px;color:#000;transform:scaleX(1.0905);transform-origin:0 0;font-family:'Liberation Sans',sans-serif;">19200</div>
<div style="left:1089px;top:318px;width:23px;height:22px;border:1px solid #6a696c;border-radius:2px;background:linear-gradient(#e4e2e6,#d6d4d8 2px,#c8c6ca 45%,#c3c1c5 70%,#b3b1b5);"></div>
<svg style="position:absolute;left:1094.5px;top:325.0px;" width="13" height="7" viewBox="0 0 13 7"><polygon points="0,0 13,0 6.5,7" fill="#000"/></svg>
<div class="t" style="left:968.17px;top:356.93px;font-size:12.60px;color:#000;transform:scaleX(1.0808);transform-origin:100% 0;font-family:'Liberation Sans',sans-serif;">Stopbits</div>
<div style="left:1017px;top:346px;width:20px;height:21px;border:1px solid #6a696c;border-radius:2px;background:linear-gradient(#e4e2e6,#d6d4d8 2px,#c8c6ca 45%,#c3c1c5 70%,#b3b1b5);"></div>
<svg style="position:absolute;left:1022.5px;top:349.5px;" width="6" height="12" viewBox="0 0 6 12"><polygon points="6,0 0,6 6,12" fill="#000"/></svg>
<div style="left:1036px;top:346px;width:58px;height:21px;border:1px solid #737373;border-radius:2px;background:#fff;box-shadow:inset 0 1px 0 #e9e9e9;"></div>
<div class="t" style="left:1060.50px;top:356.93px;font-size:12.60px;color:#000;transform:scaleX(1.0905);transform-origin:50% 0;font-family:'Liberation Sans',sans-serif;">1</div>
<div style="left:1093px;top:346px;width:19px;height:21px;border:1px solid #6a696c;border-radius:2px;background:linear-gradient(#e4e2e6,#d6d4d8 2px,#c8c6ca 45%,#c3c1c5 70%,#b3b1b5);"></div>
<svg style="position:absolute;left:1099.5px;top:349.5px;" width="6" height="12" viewBox="0 0 6 12"><polygon points="0,0 6,6 0,12" fill="#000"/></svg>
<div class="t" style="left:889.07px;top:384.93px;font-size:12.60px;color:#000;transform:scaleX(1.0774);transform-origin:100% 0;font-family:'Liberation Sans',sans-serif;">Polling Interval (msec)</div>
<div style="left:1017px;top:374px;width:20px;height:21px;border:1px solid #6a696c;border-radius:2px;background:linear-gradient(#e4e2e6,#d6d4d8 2px,#c8c6ca 45%,#c3c1c5 70%,#b3b1b5);"></div>
<svg style="position:absolute;left:1022.5px;top:377.5px;" width="6" height="12" viewBox="0 0 6 12"><polygon points="6,0 0,6 6,12" fill="#000"/></svg>
<div style="left:1036px;top:374px;width:58px;height:21px;border:1px solid #737373;border-radius:2px;background:#fff;box-shadow:inset 0 1px 0 #e9e9e9;"></div>
<div class="t" style="left:1053.49px;top:384.93px;font-size:12.60px;color:#000;transform:scaleX(1.0905);transform-origin:50% 0;font-family:'Liberation Sans',sans-serif;">250</div>
<div style="left:1093px;top:374px;width:19px;height:21px;border:1px solid #6a696c;border-radius:2px;background:linear-gradient(#e4e2e6,#d6d4d8 2px,#c8c6ca 45%,#c3c1c5 70%,#b3b1b5);"></div>
<svg style="position:absolute;left:1099.5px;top:377.5px;" width="6" height="12" viewBox="0 0 6 12"><polygon points="0,0 6,6 0,12" fill="#000"/></svg>
<div class="t" style="left:906.57px;top:430.93px;font-size:12.60px;color:#000;transform:scaleX(1.0684);transform-origin:100% 0;font-family:'Liberation Sans',sans-serif;">Mode delay (msec)</div>
<div style="left:1017px;top:420px;width:20px;height:21px;border:1px solid #6a696c;border-radius:2px;background:linear-gradient(#e4e2e6,#d6d4d8 2px,#c8c6ca 45%,#c3c1c5 70%,#b3b1b5);"></div>
<svg style="position:absolute;left:1022.5px;top:423.5px;" width="6" height="12" viewBox="0 0 6 12"><polygon points="6,0 0,6 6,12" fill="#000"/></svg>
<div style="left:1036px;top:420px;width:58px;height:21px;border:1px solid #737373;border-radius:2px;background:#fff;box-shadow:inset 0 1px 0 #e9e9e9;"></div>
<div class="t" style="left:1053.49px;top:430.93px;font-size:12.60px;color:#000;transform:scaleX(1.0905);transform-origin:50% 0;font-family:'Liberation Sans',sans-serif;">200</div>
<div style="left:1093px;top:420px;width:19px;height:21px;border:1px solid #6a696c;border-radius:2px;background:linear-gradient(#e4e2e6,#d6d4d8 2px,#c8c6ca 45%,#c3c1c5 70%,#b3b1b5);"></div>
<svg style="position:absolute;left:1099.5px;top:423.5px;" width="6" height="12" viewBox="0 0 6 12"><polygon points="0,0 6,6 0,12" fill="#000"/></svg>
<div class="t" style="left:907.45px;top:454.93px;font-size:12.60px;color:#000;transform:scaleX(1.0615);transform-origin:100% 0;font-family:'Liberation Sans',sans-serif;">Sideband:</div>
<div style="left:968px;top:446px;width:122px;height:21px;border:1px solid #737373;border-radius:2px;background:#fff;box-shadow:inset 0 1px 0 #e9e9e9;"></div>
<div class="t" style="left:972.20px;top:455.93px;font-size:12.60px;color:#000;transform:scaleX(1.0600);transform-origin:0 0;font-family:'Liberation Sans',sans-serif;">Rig mode</div>
<div style="left:1089px;top:446px;width:23px;height:21px;border:1px solid #6a696c;border-radius:2px;background:linear-gradient(#e4e2e6,#d6d4d8 2px,#c8c6ca 45%,#c3c1c5 70%,#b3b1b5);"></div>
<svg style="position:absolute;left:1094.5px;top:452.5px;" width="13" height="7" viewBox="0 0 13 7"><polygon points="0,0 13,0 6.5,7" fill="#000"/></svg>
<div style="left:593px;top:425px;width:12px;height:12px;background:#d6d5d8;border:1px solid #a9a8ab;border-radius:3px"></div>
<div class="t" style="left:606.10px;top:430.93px;font-size:12.60px;color:#8f8e92;transform:scaleX(1.0586);transform-origin:0 0;font-family:'Liberation Sans',sans-serif;">PTT via Hamlib command</div>
<div style="left:593px;top:450px;width:12px;height:12px;background:#ffffff;border:1px solid #626164;border-radius:3px"></div>
<svg style="position:absolute;left:595px;top:452px;" width="8" height="8" viewBox="0 0 8 8"><path d="M1 3.5 L3.5 6.5 L7 1" fill="none" stroke="#00007a" stroke-width="2"/></svg>
<div class="t" style="left:606.10px;top:455.93px;font-size:12.60px;color:#000;transform:scaleX(1.0777);transform-origin:0 0;font-family:'Liberation Sans',sans-serif;">Audio on Auxiliary Port</div>
<div style="left:593px;top:476px;width:12px;height:12px;background:#ffffff;border:1px solid #626164;border-radius:3px"></div>
<div class="t" style="left:606.10px;top:481.93px;font-size:12.60px;color:#000;transform:scaleX(1.0649);transform-origin:0 0;font-family:'Liberation Sans',sans-serif;">DTR +12</div>
<div style="left:783px;top:476px;width:12px;height:12px;background:#ffffff;border:1px solid #626164;border-radius:3px"></div>
<div class="t" style="left:796.50px;top:481.93px;font-size:12.60px;color:#000;transform:scaleX(1.0348);transform-origin:0 0;font-family:'Liberation Sans',sans-serif;">RTS +12</div>
<div style="left:974px;top:476px;width:12px;height:12px;background:#ffffff;border:1px solid #626164;border-radius:3px"></div>
<div class="t" style="left:987.40px;top:481.93px;font-size:12.60px;color:#000;transform:scaleX(1.0200);transform-origin:0 0;font-family:'Liberation Sans',sans-serif;">CW is LSB mode</div>
<div style="left:593px;top:502px;width:12px;height:12px;background:#ffffff;border:1px solid #626164;border-radius:3px"></div>
<div class="t" style="left:606.10px;top:506.93px;font-size:12.60px;color:#000;transform:scaleX(1.0235);transform-origin:0 0;font-family:'Liberation Sans',sans-serif;">RTS/CTS flow control</div>
<div style="left:783px;top:502px;width:12px;height:12px;background:#ffffff;border:1px solid #626164;border-radius:3px"></div>
<div class="t" style="left:796.50px;top:506.93px;font-size:12.60px;color:#000;transform:scaleX(1.0226);transform-origin:0 0;font-family:'Liberation Sans',sans-serif;">XON/XOFF flow control</div>
<div style="left:974px;top:502px;width:12px;height:12px;background:#ffffff;border:1px solid #626164;border-radius:3px"></div>
<div class="t" style="left:987.40px;top:506.93px;font-size:12.60px;color:#000;transform:scaleX(0.9953);transform-origin:0 0;font-family:'Liberation Sans',sans-serif;">RTTY is USB mode</div>
<div class="t" style="left:565.70px;top:533.93px;font-size:12.60px;color:#000;transform:scaleX(1.0859);transform-origin:0 0;font-family:'Liberation Sans',sans-serif;">Advanced configuration:</div>
<div style="left:566px;top:542px;width:461px;height:24px;border:1px solid #737373;border-radius:2px;background:#fff;box-shadow:inset 0 1px 0 #e9e9e9;"></div>
<div style="left:1032px;top:542px;width:80px;height:24px;border:1px solid #6a696c;border-radius:2px;background:linear-gradient(#e4e2e6,#d6d4d8 2px,#c8c6ca 45%,#c3c1c5 70%,#b3b1b5);"></div>
<div class="t" style="left:1049.24px;top:553.93px;font-size:12.60px;color:#ff1010;transform:scaleX(1.1032);transform-origin:50% 0;font-family:'Liberation Sans',sans-serif;">Initialize</div>
<div style="left:121px;top:578px;width:1015px;height:31px;background:#939592;"></div>
<div style="left:420px;top:582px;width:116px;height:22px;border:1px solid #6a696c;border-radius:2px;background:linear-gradient(#e4e2e6,#d6d4d8 2px,#c8c6ca 45%,#c3c1c5 70%,#b3b1b5);"></div>
<div class="t" style="left:439.13px;top:592.93px;font-size:12.60px;color:#000;transform:scaleX(1.0269);transform-origin:50% 0;font-family:'Liberation Sans',sans-serif;">Collapse Tree</div>
<div style="left:574px;top:584px;width:130px;height:22px;border:1px solid #6a696c;border-radius:2px;background:linear-gradient(#e4e2e6,#d6d4d8 2px,#c8c6ca 45%,#c3c1c5 70%,#b3b1b5);"></div>
<div class="t" style="left:593.13px;top:594.93px;font-size:12.60px;color:#000;transform:scaleX(1.0667);transform-origin:50% 0;font-family:'Liberation Sans',sans-serif;">Restore defaults</div>
<div style="left:828px;top:584px;width:130px;height:22px;border:1px solid #6a696c;border-radius:2px;background:linear-gradient(#e4e2e6,#d6d4d8 2px,#c8c6ca 45%,#c3c1c5 70%,#b3b1b5);"></div>
<div class="t" style="left:878.64px;top:594.93px;font-size:12.60px;color:#000;transform:scaleX(1.0267);transform-origin:50% 0;font-family:'Liberation Sans',sans-serif;">Save</div>
<div style="left:1001px;top:584px;width:130px;height:22px;border:1px solid #6a696c;border-radius:2px;background:linear-gradient(#e4e2e6,#d6d4d8 2px,#c8c6ca 45%,#c3c1c5 70%,#b3b1b5);"></div>
<div class="t" style="left:1038.89px;top:594.93px;font-size:12.60px;color:#000;transform:scaleX(1.0147);transform-origin:50% 0;font-family:'Liberation Sans',sans-serif;">Close</div>
<svg style="position:absolute;left:1108px;top:588px;" width="19" height="15" viewBox="0 0 19 15"><path d="M1 8 L7 2 V6 H12 V1.5 H17.5 V10 H7 V14 Z" fill="none" stroke="#fbfbfb" stroke-width="1.3"/><path d="M1 8 L7 2" stroke="#111" stroke-width="1.1"/><path d="M12 6 V1.5 H17.5" stroke="#555" stroke-width="1" fill="none"/></svg></body></html>
